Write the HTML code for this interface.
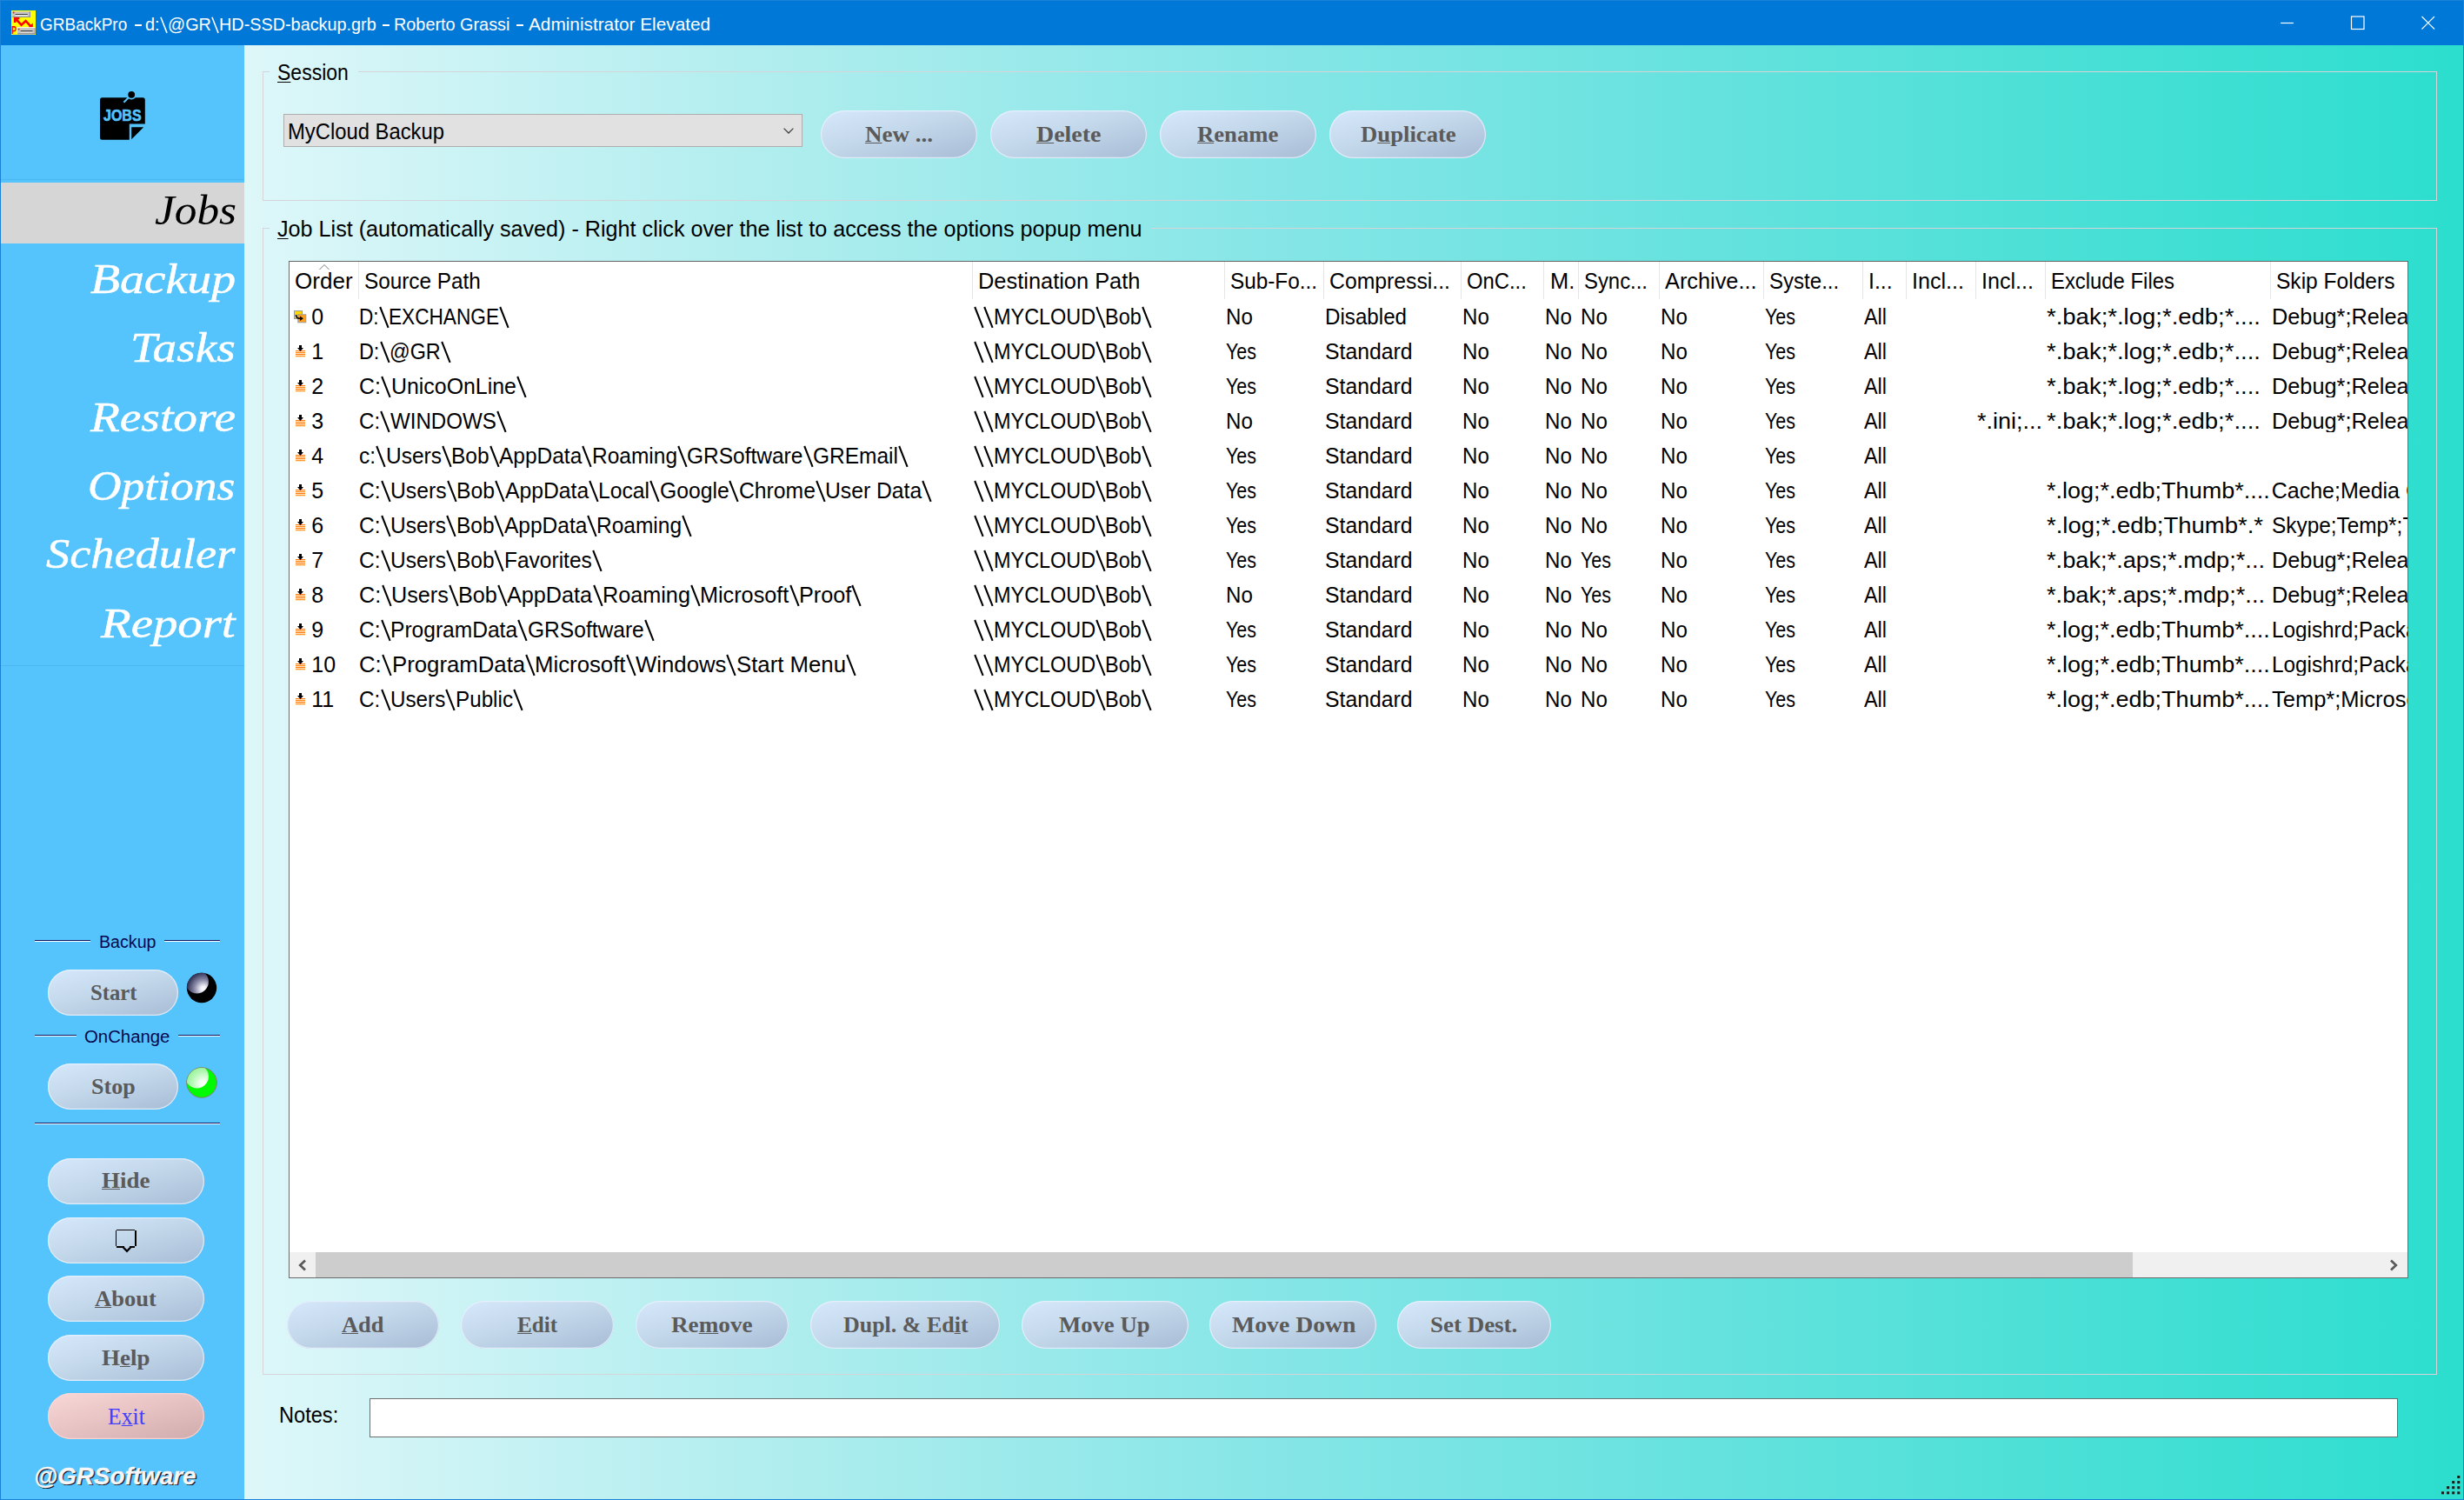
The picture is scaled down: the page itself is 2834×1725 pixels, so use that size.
<!DOCTYPE html>
<html><head><meta charset="utf-8"><title>GRBackPro</title><style>
html,body{margin:0;padding:0;}
body{width:2834px;height:1725px;overflow:hidden;position:relative;background:#55c4fd;font-family:"Liberation Sans",sans-serif;}
.a{position:absolute;}
.t{position:absolute;white-space:pre;line-height:1;transform-origin:0 0;}
.btn{position:absolute;border-radius:28px;background:linear-gradient(165deg,#d6e8fc 0%,#c4d8eb 45%,#a7bcd5 100%);box-shadow:inset 0 0 0 1.2px rgba(232,242,253,.8);}
.btn.pink{background:linear-gradient(165deg,#f9d8d7 0%,#e8c4c4 45%,#cfabab 100%);box-shadow:inset 0 0 0 1.2px rgba(255,214,214,.85);}
.gb{position:absolute;border:1px solid #c9d9d9;box-sizing:border-box;}
u{text-decoration:underline;text-decoration-thickness:1.3px;text-underline-offset:1px;}
.sn u{text-decoration-thickness:1.3px;text-underline-offset:1.5px;}
</style></head><body>
<div class="a" style="left:281px;top:52px;width:2553px;height:1673px;background:linear-gradient(90deg,rgb(222,247,249) 0%,rgb(175,237,238) 24.25%,rgb(131,229,230) 47.75%,rgb(92,225,219) 71.25%,rgb(43,222,206) 100%);"></div>
<div class="a" style="left:0;top:0;width:2834px;height:52px;background:#0078d7;"></div>
<div class="a" style="left:0;top:206px;width:281px;height:1px;background:#4bb6f1;"></div>
<div class="a" style="left:0;top:765px;width:281px;height:1px;background:#4bb6f1;"></div>
<div class="a" style="left:0;top:210px;width:281px;height:70px;background:#d6d6d6;"></div>
<div class="a" style="left:0;top:0;width:1px;height:1725px;background:#1a82d8;"></div>
<div class="a" style="left:2833px;top:0;width:1px;height:1725px;background:#1a82d8;"></div>
<div class="a" style="left:0;top:1724px;width:2834px;height:1px;background:#1a82d8;"></div>
<div class="a" style="left:0;top:0;width:2834px;height:1px;background:#1a82d8;"></div>
<svg class="a" style="left:13px;top:12px" width="28" height="28" viewBox="0 0 28 28">
<rect width="28" height="28" fill="#ffff00"/>
<path d="M4.2 14 V9 H9.4 M5 9.6 L11.6 16.6 L16.6 12 L22.6 18.6" stroke="#ff0000" stroke-width="2.6" fill="none" stroke-linejoin="miter"/>
<path d="M24.8 14.6 V19.6 H19.4 Z" fill="#ff0000"/>
<text x="0" y="26.6" font-family="Liberation Sans" font-weight="bold" font-size="12.6" fill="#ff0000" textLength="6" lengthAdjust="spacingAndGlyphs">P</text>
<rect x="1.2" y="1.2" width="20.6" height="6.5" fill="#c4c4c8"/><rect x="1.2" y="6.9" width="20.6" height="0.9" fill="#858585"/><rect x="20.9" y="1.2" width="0.9" height="6.5" fill="#7878a0"/>
<rect x="4.6" y="4.1" width="14.2" height="1" fill="#333"/><rect x="4.6" y="5.3" width="14.2" height="1" fill="#fff"/><circle cx="2.6" cy="2.6" r="1" fill="#ff1010"/>
<rect x="6.1" y="19.2" width="21.1" height="8" fill="#fdfdff"/>
<rect x="7.1" y="20.1" width="20.4" height="7.2" fill="#c4c4c4"/><rect x="7.1" y="26.3" width="20.4" height="1" fill="#858585"/><rect x="8" y="27.2" width="19" height="0.8" fill="#c8c0b0"/><rect x="26.7" y="20.1" width="0.8" height="7.2" fill="#9a9090"/>
<rect x="10.7" y="23.1" width="13.8" height="1.1" fill="#3a3a3a"/><rect x="10.7" y="24.8" width="13.8" height="0.8" fill="#eee"/><circle cx="8.7" cy="21.7" r="0.9" fill="#ff1010"/>
<rect x="27" y="27" width="1" height="1" fill="#ffff00"/>
</svg>
<svg class="a" style="left:2600px;top:0" width="234" height="52" viewBox="0 0 234 52" fill="none" stroke="#fff" stroke-width="1.2">
<path d="M23 26.5 H38"/><rect x="104.5" y="19" width="14.5" height="14.5"/><path d="M185.5 19 L200 33.5 M200 19 L185.5 33.5"/></svg>
<svg class="a" style="left:100px;top:95px" width="80" height="75" viewBox="0 0 80 75">
<path d="M17.5 17.2 H64.3 Q66.8 17.2 66.8 19.7 V47.5 H48.8 V65.8 H17.5 Q15 65.8 15 63.3 V19.7 Q15 17.2 17.5 17.2 Z" fill="#000"/>
<path d="M51.2 51.2 H65.2 L51.2 65.2 Z" fill="#000"/>
<circle cx="51.2" cy="13.8" r="5.6" fill="#55c4fd"/>
<path d="M48.5 16.5 L42.4 22.8" stroke="#55c4fd" stroke-width="2"/>
<circle cx="51.2" cy="13.8" r="3.9" fill="#000"/>
<text x="40.8" y="43.6" text-anchor="middle" font-family="Liberation Sans" font-weight="bold" font-size="18.5" fill="#55c4fd" stroke="#55c4fd" stroke-width="0.6" textLength="43.5" lengthAdjust="spacingAndGlyphs">JOBS</text>
</svg>
<div class="a" style="left:40px;top:1081px;width:64px;height:1px;background:#0b1560;"></div>
<div class="a" style="left:40px;top:1082px;width:64px;height:1px;background:#ffffff;"></div>
<div class="a" style="left:189px;top:1081px;width:64px;height:1px;background:#0b1560;"></div>
<div class="a" style="left:189px;top:1082px;width:64px;height:1px;background:#ffffff;"></div>
<div class="a" style="left:40px;top:1190px;width:48px;height:1px;background:#0b1560;"></div>
<div class="a" style="left:40px;top:1191px;width:48px;height:1px;background:#ffffff;"></div>
<div class="a" style="left:205px;top:1190px;width:48px;height:1px;background:#0b1560;"></div>
<div class="a" style="left:205px;top:1191px;width:48px;height:1px;background:#ffffff;"></div>
<div class="a" style="left:40px;top:1291px;width:213px;height:1px;background:#0b1560;"></div>
<div class="a" style="left:40px;top:1292px;width:213px;height:1px;background:#ffffff;"></div>
<svg class="a" style="left:212px;top:1116px" width="40" height="40" viewBox="0 0 40 40">
<defs><radialGradient id="g1" cx="0.78" cy="0.8" r="0.95"><stop offset="0" stop-color="#ffffff"/><stop offset="0.12" stop-color="#f0f0f6"/><stop offset="0.4" stop-color="#8c8ca8"/><stop offset="0.7" stop-color="#3a3a60"/><stop offset="1" stop-color="#08082a"/></radialGradient>
<clipPath id="c1"><circle cx="20" cy="20" r="17.2"/></clipPath></defs>
<circle cx="20" cy="20" r="17.2" fill="#000"/>
<circle cx="14.5" cy="13" r="13.4" fill="url(#g1)" clip-path="url(#c1)"/></svg>
<svg class="a" style="left:212px;top:1225px" width="40" height="40" viewBox="0 0 40 40">
<defs><radialGradient id="g2" cx="0.78" cy="0.8" r="0.95"><stop offset="0" stop-color="#ffffff"/><stop offset="0.15" stop-color="#f2fff2"/><stop offset="0.5" stop-color="#b8f8b8"/><stop offset="1" stop-color="#7cf07c"/></radialGradient>
<clipPath id="c2"><circle cx="20" cy="20" r="17"/></clipPath></defs>
<circle cx="20" cy="20" r="17.3" fill="#00fa00" stroke="#8c7c70" stroke-width="1"/>
<circle cx="14.5" cy="13" r="13.4" fill="url(#g2)" clip-path="url(#c2)"/></svg>
<div class="btn " style="left:55px;top:1115px;width:150px;height:53px;"></div>
<div class="btn " style="left:55px;top:1223px;width:150px;height:53px;"></div>
<div class="btn " style="left:55px;top:1332px;width:180px;height:53px;"></div>
<div class="btn " style="left:55px;top:1400px;width:180px;height:53px;"></div>
<div class="btn " style="left:55px;top:1467px;width:180px;height:53px;"></div>
<div class="btn " style="left:55px;top:1535px;width:180px;height:53px;"></div>
<div class="btn pink" style="left:55px;top:1602px;width:180px;height:53px;"></div>
<svg class="a" style="left:130px;top:1410px" width="32" height="34" viewBox="130 1410 32 34" shape-rendering="crispEdges" fill="#000">
<rect x="133" y="1415" width="1" height="18"/><rect x="134" y="1414" width="21" height="1"/><rect x="155" y="1415" width="2" height="18"/>
<rect x="134" y="1433" width="9" height="2"/><rect x="149" y="1433" width="6" height="2"/>
<path d="M141.6 1434.2 L146 1438.8 L150.4 1434.2" fill="none" stroke="#000" stroke-width="2.3" shape-rendering="geometricPrecision"/></svg>
<div class="btn " style="left:944px;top:127px;width:180px;height:55px;"></div>
<div class="btn " style="left:1139px;top:127px;width:180px;height:55px;"></div>
<div class="btn " style="left:1334px;top:127px;width:180px;height:55px;"></div>
<div class="btn " style="left:1529px;top:127px;width:180px;height:55px;"></div>
<div class="btn " style="left:330px;top:1496px;width:175px;height:55px;"></div>
<div class="btn " style="left:530px;top:1496px;width:176px;height:55px;"></div>
<div class="btn " style="left:731px;top:1496px;width:176px;height:55px;"></div>
<div class="btn " style="left:932px;top:1496px;width:218px;height:55px;"></div>
<div class="btn " style="left:1175px;top:1496px;width:192px;height:55px;"></div>
<div class="btn " style="left:1391px;top:1496px;width:192px;height:55px;"></div>
<div class="btn " style="left:1607px;top:1496px;width:177px;height:55px;"></div>
<div class="a" style="left:302px;top:82px;width:8px;height:1px;background:#d5d4d8;"></div>
<div class="a" style="left:412px;top:82px;width:2391px;height:1px;background:#d5d4d8;"></div>
<div class="a" style="left:302px;top:82px;width:1px;height:149px;background:#d5d4d8;"></div>
<div class="a" style="left:2802px;top:82px;width:1px;height:149px;background:#d5d4d8;"></div>
<div class="a" style="left:302px;top:230px;width:2501px;height:1px;background:#d5d4d8;"></div>
<div class="a" style="left:302px;top:262px;width:8px;height:1px;background:#d5d4d8;"></div>
<div class="a" style="left:1324px;top:262px;width:1479px;height:1px;background:#d5d4d8;"></div>
<div class="a" style="left:302px;top:262px;width:1px;height:1319px;background:#d5d4d8;"></div>
<div class="a" style="left:2802px;top:262px;width:1px;height:1319px;background:#d5d4d8;"></div>
<div class="a" style="left:302px;top:1580px;width:2501px;height:1px;background:#d5d4d8;"></div>
<div class="a" style="left:326px;top:131px;width:597px;height:38px;box-sizing:border-box;background:#e1e1e1;border:1px solid #adadad;"></div>
<svg class="a" style="left:898.4px;top:143.6px" width="18" height="12" viewBox="0 0 18 12" fill="none" stroke="#404040" stroke-width="1.3"><path d="M3.6 3.6 L9 9 L14.4 3.6"/></svg>
<div class="a" style="left:425px;top:1608px;width:2333px;height:45px;box-sizing:border-box;background:#fff;border:1px solid #6e6e6e;"></div>
<div class="a" style="left:332px;top:300px;width:2438px;height:1170px;box-sizing:border-box;background:#fff;border:1px solid #6b6b6b;border-top-color:#646464;"></div>
<div class="a" style="left:412px;top:301px;width:1px;height:43px;background:#e5e5e5;"></div>
<div class="a" style="left:1118px;top:301px;width:1px;height:43px;background:#e5e5e5;"></div>
<div class="a" style="left:1408px;top:301px;width:1px;height:43px;background:#e5e5e5;"></div>
<div class="a" style="left:1522px;top:301px;width:1px;height:43px;background:#e5e5e5;"></div>
<div class="a" style="left:1680px;top:301px;width:1px;height:43px;background:#e5e5e5;"></div>
<div class="a" style="left:1775px;top:301px;width:1px;height:43px;background:#e5e5e5;"></div>
<div class="a" style="left:1815px;top:301px;width:1px;height:43px;background:#e5e5e5;"></div>
<div class="a" style="left:1908px;top:301px;width:1px;height:43px;background:#e5e5e5;"></div>
<div class="a" style="left:2028px;top:301px;width:1px;height:43px;background:#e5e5e5;"></div>
<div class="a" style="left:2142px;top:301px;width:1px;height:43px;background:#e5e5e5;"></div>
<div class="a" style="left:2192px;top:301px;width:1px;height:43px;background:#e5e5e5;"></div>
<div class="a" style="left:2272px;top:301px;width:1px;height:43px;background:#e5e5e5;"></div>
<div class="a" style="left:2352px;top:301px;width:1px;height:43px;background:#e5e5e5;"></div>
<div class="a" style="left:2611px;top:301px;width:1px;height:43px;background:#e5e5e5;"></div>
<svg class="a" style="left:364px;top:302px" width="18" height="10" viewBox="0 0 18 10" fill="none" stroke="#7a7a7a" stroke-width="1"><path d="M3.5 8 L9 2.5 L14.5 8"/></svg>
<div class="a" style="left:333px;top:1440px;width:2436px;height:29px;background:#f0f0f0;"></div>
<div class="a" style="left:363px;top:1440px;width:2090px;height:29px;background:#cdcdcd;"></div>
<svg class="a" style="left:338px;top:1446px" width="20" height="18" viewBox="0 0 20 18" fill="none" stroke="#5a5a5a" stroke-width="2.7"><path d="M13 3.5 L7.2 9 L13 14.5"/></svg>
<svg class="a" style="left:2743px;top:1446px" width="20" height="18" viewBox="0 0 20 18" fill="none" stroke="#5a5a5a" stroke-width="2.7"><path d="M7 3.5 L12.8 9 L7 14.5"/></svg>
<svg class="a" style="left:2808px;top:1697px" width="24" height="24" viewBox="0 0 24 24" fill="#1a1a1a"><rect x="18.3" y="0.0" width="3" height="3"/><rect x="12.2" y="6.1" width="3" height="3"/><rect x="18.3" y="6.1" width="3" height="3"/><rect x="6.1" y="12.2" width="3" height="3"/><rect x="12.2" y="12.2" width="3" height="3"/><rect x="18.3" y="12.2" width="3" height="3"/><rect x="0.0" y="18.3" width="3" height="3"/><rect x="6.1" y="18.3" width="3" height="3"/><rect x="12.2" y="18.3" width="3" height="3"/><rect x="18.3" y="18.3" width="3" height="3"/></svg>
<svg class="a" style="left:338px;top:357px" width="15" height="15" viewBox="0 0 15 15">
<rect x="0.5" y="0.5" width="9" height="9" fill="#ffd800" stroke="#9a9a9a" stroke-width="1"/>
<rect x="4.8" y="4.8" width="9" height="9" fill="#ffa020" stroke="#9a9a9a" stroke-width="1"/>
<path d="M2.5 5 Q2.5 9.3 7 9.3" fill="none" stroke="#000" stroke-width="1.6"/><path d="M7 6.6 L11 9.3 L7 12 Z" fill="#000"/></svg>
<svg class="a" style="left:339px;top:397px" width="13" height="15" viewBox="0 0 13 15" shape-rendering="crispEdges">
<rect x="1" y="6" width="11" height="8" fill="#ffe2c0"/>
<rect x="1" y="6" width="11" height="1" fill="#ff7a10"/><rect x="1" y="8" width="11" height="1" fill="#ff8a20"/><rect x="1" y="10" width="11" height="1" fill="#ff7a10"/><rect x="1" y="12" width="11" height="1" fill="#ff9a30"/>
<path d="M5 0 H8 V3 H10 L6.5 7 L3 3 H5 Z" fill="#000" shape-rendering="geometricPrecision"/></svg>
<svg class="a" style="left:339px;top:437px" width="13" height="15" viewBox="0 0 13 15" shape-rendering="crispEdges">
<rect x="1" y="6" width="11" height="8" fill="#ffe2c0"/>
<rect x="1" y="6" width="11" height="1" fill="#ff7a10"/><rect x="1" y="8" width="11" height="1" fill="#ff8a20"/><rect x="1" y="10" width="11" height="1" fill="#ff7a10"/><rect x="1" y="12" width="11" height="1" fill="#ff9a30"/>
<path d="M5 0 H8 V3 H10 L6.5 7 L3 3 H5 Z" fill="#000" shape-rendering="geometricPrecision"/></svg>
<svg class="a" style="left:339px;top:477px" width="13" height="15" viewBox="0 0 13 15" shape-rendering="crispEdges">
<rect x="1" y="6" width="11" height="8" fill="#ffe2c0"/>
<rect x="1" y="6" width="11" height="1" fill="#ff7a10"/><rect x="1" y="8" width="11" height="1" fill="#ff8a20"/><rect x="1" y="10" width="11" height="1" fill="#ff7a10"/><rect x="1" y="12" width="11" height="1" fill="#ff9a30"/>
<path d="M5 0 H8 V3 H10 L6.5 7 L3 3 H5 Z" fill="#000" shape-rendering="geometricPrecision"/></svg>
<svg class="a" style="left:339px;top:517px" width="13" height="15" viewBox="0 0 13 15" shape-rendering="crispEdges">
<rect x="1" y="6" width="11" height="8" fill="#ffe2c0"/>
<rect x="1" y="6" width="11" height="1" fill="#ff7a10"/><rect x="1" y="8" width="11" height="1" fill="#ff8a20"/><rect x="1" y="10" width="11" height="1" fill="#ff7a10"/><rect x="1" y="12" width="11" height="1" fill="#ff9a30"/>
<path d="M5 0 H8 V3 H10 L6.5 7 L3 3 H5 Z" fill="#000" shape-rendering="geometricPrecision"/></svg>
<svg class="a" style="left:339px;top:557px" width="13" height="15" viewBox="0 0 13 15" shape-rendering="crispEdges">
<rect x="1" y="6" width="11" height="8" fill="#ffe2c0"/>
<rect x="1" y="6" width="11" height="1" fill="#ff7a10"/><rect x="1" y="8" width="11" height="1" fill="#ff8a20"/><rect x="1" y="10" width="11" height="1" fill="#ff7a10"/><rect x="1" y="12" width="11" height="1" fill="#ff9a30"/>
<path d="M5 0 H8 V3 H10 L6.5 7 L3 3 H5 Z" fill="#000" shape-rendering="geometricPrecision"/></svg>
<svg class="a" style="left:339px;top:597px" width="13" height="15" viewBox="0 0 13 15" shape-rendering="crispEdges">
<rect x="1" y="6" width="11" height="8" fill="#ffe2c0"/>
<rect x="1" y="6" width="11" height="1" fill="#ff7a10"/><rect x="1" y="8" width="11" height="1" fill="#ff8a20"/><rect x="1" y="10" width="11" height="1" fill="#ff7a10"/><rect x="1" y="12" width="11" height="1" fill="#ff9a30"/>
<path d="M5 0 H8 V3 H10 L6.5 7 L3 3 H5 Z" fill="#000" shape-rendering="geometricPrecision"/></svg>
<svg class="a" style="left:339px;top:637px" width="13" height="15" viewBox="0 0 13 15" shape-rendering="crispEdges">
<rect x="1" y="6" width="11" height="8" fill="#ffe2c0"/>
<rect x="1" y="6" width="11" height="1" fill="#ff7a10"/><rect x="1" y="8" width="11" height="1" fill="#ff8a20"/><rect x="1" y="10" width="11" height="1" fill="#ff7a10"/><rect x="1" y="12" width="11" height="1" fill="#ff9a30"/>
<path d="M5 0 H8 V3 H10 L6.5 7 L3 3 H5 Z" fill="#000" shape-rendering="geometricPrecision"/></svg>
<svg class="a" style="left:339px;top:677px" width="13" height="15" viewBox="0 0 13 15" shape-rendering="crispEdges">
<rect x="1" y="6" width="11" height="8" fill="#ffe2c0"/>
<rect x="1" y="6" width="11" height="1" fill="#ff7a10"/><rect x="1" y="8" width="11" height="1" fill="#ff8a20"/><rect x="1" y="10" width="11" height="1" fill="#ff7a10"/><rect x="1" y="12" width="11" height="1" fill="#ff9a30"/>
<path d="M5 0 H8 V3 H10 L6.5 7 L3 3 H5 Z" fill="#000" shape-rendering="geometricPrecision"/></svg>
<svg class="a" style="left:339px;top:717px" width="13" height="15" viewBox="0 0 13 15" shape-rendering="crispEdges">
<rect x="1" y="6" width="11" height="8" fill="#ffe2c0"/>
<rect x="1" y="6" width="11" height="1" fill="#ff7a10"/><rect x="1" y="8" width="11" height="1" fill="#ff8a20"/><rect x="1" y="10" width="11" height="1" fill="#ff7a10"/><rect x="1" y="12" width="11" height="1" fill="#ff9a30"/>
<path d="M5 0 H8 V3 H10 L6.5 7 L3 3 H5 Z" fill="#000" shape-rendering="geometricPrecision"/></svg>
<svg class="a" style="left:339px;top:757px" width="13" height="15" viewBox="0 0 13 15" shape-rendering="crispEdges">
<rect x="1" y="6" width="11" height="8" fill="#ffe2c0"/>
<rect x="1" y="6" width="11" height="1" fill="#ff7a10"/><rect x="1" y="8" width="11" height="1" fill="#ff8a20"/><rect x="1" y="10" width="11" height="1" fill="#ff7a10"/><rect x="1" y="12" width="11" height="1" fill="#ff9a30"/>
<path d="M5 0 H8 V3 H10 L6.5 7 L3 3 H5 Z" fill="#000" shape-rendering="geometricPrecision"/></svg>
<svg class="a" style="left:339px;top:797px" width="13" height="15" viewBox="0 0 13 15" shape-rendering="crispEdges">
<rect x="1" y="6" width="11" height="8" fill="#ffe2c0"/>
<rect x="1" y="6" width="11" height="1" fill="#ff7a10"/><rect x="1" y="8" width="11" height="1" fill="#ff8a20"/><rect x="1" y="10" width="11" height="1" fill="#ff7a10"/><rect x="1" y="12" width="11" height="1" fill="#ff9a30"/>
<path d="M5 0 H8 V3 H10 L6.5 7 L3 3 H5 Z" fill="#000" shape-rendering="geometricPrecision"/></svg>
<div class="a" style="left:155.3px;top:28px;width:7.6px;height:2px;background:#fff;"></div>
<div class="a" style="left:440px;top:28px;width:7.6px;height:2px;background:#fff;"></div>
<div class="a" style="left:594.2px;top:28px;width:7.6px;height:2px;background:#fff;"></div>
<div class="t sn" style="left:46.3px;top:17.2px;font:normal normal 21px/1 'Liberation Sans', sans-serif;color:#fff;transform:scaleX(0.9038);">GRBackPro</div>
<div class="t sn" style="left:166.6px;top:17.2px;font:normal normal 21px/1 'Liberation Sans', sans-serif;color:#fff;transform:scaleX(0.9443);">d:</div>
<div class="t sn" style="left:192.7px;top:17.2px;font:normal normal 21px/1 'Liberation Sans', sans-serif;color:#fff;transform:scaleX(0.9443);">@GR</div>
<div class="t sn" style="left:252.2px;top:17.2px;font:normal normal 21px/1 'Liberation Sans', sans-serif;color:#fff;transform:scaleX(0.9443);">HD-SSD-backup.grb</div>
<div class="t sn" style="left:453.0px;top:17.2px;font:normal normal 21px/1 'Liberation Sans', sans-serif;color:#fff;transform:scaleX(0.9446);">Roberto Grassi</div>
<div class="t sn" style="left:607.5px;top:17.2px;font:normal normal 21px/1 'Liberation Sans', sans-serif;color:#fff;transform:scaleX(0.9898);">Administrator Elevated</div>
<div class="t" style="left:177.5px;top:218.3px;font:italic normal 48px/1 'Liberation Serif', serif;color:#000;transform:scaleX(1.0684);">Jobs</div>
<div class="t" style="left:103.6px;top:297.0px;font:italic normal 48px/1 'Liberation Serif', serif;color:#fff;transform:scaleX(1.1603);-webkit-text-stroke:0.5px #fff;">Backup</div>
<div class="t" style="left:150.0px;top:376.3px;font:italic normal 48px/1 'Liberation Serif', serif;color:#fff;transform:scaleX(1.1491);-webkit-text-stroke:0.5px #fff;">Tasks</div>
<div class="t" style="left:103.6px;top:455.5px;font:italic normal 48px/1 'Liberation Serif', serif;color:#fff;transform:scaleX(1.1530);-webkit-text-stroke:0.5px #fff;">Restore</div>
<div class="t" style="left:101.3px;top:534.8px;font:italic normal 48px/1 'Liberation Serif', serif;color:#fff;transform:scaleX(1.1137);-webkit-text-stroke:0.5px #fff;">Options</div>
<div class="t" style="left:53.3px;top:612.8px;font:italic normal 48px/1 'Liberation Serif', serif;color:#fff;transform:scaleX(1.1322);-webkit-text-stroke:0.5px #fff;">Scheduler</div>
<div class="t" style="left:116.0px;top:692.5px;font:italic normal 48px/1 'Liberation Serif', serif;color:#fff;transform:scaleX(1.1834);-webkit-text-stroke:0.5px #fff;">Report</div>
<div class="t sn" style="left:114.0px;top:1072.8px;font:normal normal 20px/1 'Liberation Sans', sans-serif;color:#07074f;transform:scaleX(0.9819);">Backup</div>
<div class="t sn" style="left:97.2px;top:1181.5px;font:normal normal 20px/1 'Liberation Sans', sans-serif;color:#07074f;transform:scaleX(1.0172);">OnChange</div>
<div class="t" style="left:103.7px;top:1129.0px;font:normal bold 26px/1 'Liberation Serif', serif;color:#5a5a5a;transform:scaleX(0.9500);">Start</div>
<div class="t" style="left:104.9px;top:1237.0px;font:normal bold 26px/1 'Liberation Serif', serif;color:#5a5a5a;transform:scaleX(1.0004);">Stop</div>
<div class="t" style="left:116.9px;top:1345.4px;font:normal bold 26px/1 'Liberation Serif', serif;color:#5a5a5a;transform:scaleX(1.0365);"><u>H</u>ide</div>
<div class="t" style="left:109.2px;top:1480.8px;font:normal bold 26px/1 'Liberation Serif', serif;color:#5a5a5a;transform:scaleX(1.0208);"><u>A</u>bout</div>
<div class="t" style="left:116.9px;top:1549.2px;font:normal bold 26px/1 'Liberation Serif', serif;color:#5a5a5a;transform:scaleX(1.0365);">H<u>e</u>lp</div>
<div class="t" style="left:124.0px;top:1615.6px;font:normal normal 26.5px/1 'Liberation Serif', serif;color:#4040ff;transform:scaleX(0.9692);">E<u>x</u>it</div>
<div class="t sn" style="left:39.4px;top:1684.5px;font:italic bold 27px/1 'Liberation Sans', sans-serif;color:#f6f6f6;transform:scaleX(1.0318);text-shadow:1px 1px 0 #101020,1.6px 1.4px 0 rgba(10,10,30,.55);-webkit-text-stroke:0.3px #f6f6f6;">@GRSoftware</div>
<div class="t sn" style="left:319.2px;top:70.7px;font:normal normal 25px/1 'Liberation Sans', sans-serif;color:#000;transform:scaleX(0.9197);"><u>S</u>ession</div>
<div class="t sn" style="left:319.0px;top:250.6px;font:normal normal 25px/1 'Liberation Sans', sans-serif;color:#000;transform:scaleX(1.0066);"><u>J</u>ob List (automatically saved) - Right click over the list to access the options popup menu</div>
<div class="t sn" style="left:331.0px;top:137.6px;font:normal normal 26.5px/1 'Liberation Sans', sans-serif;color:#000;transform:scaleX(0.8986);">MyCloud Backup</div>
<div class="t sn" style="left:321.4px;top:1615.4px;font:normal normal 25.5px/1 'Liberation Sans', sans-serif;color:#000;transform:scaleX(0.9254);">Notes:</div>
<div class="t" style="left:994.7px;top:142.0px;font:normal bold 26px/1 'Liberation Serif', serif;color:#5a5a5a;transform:scaleX(1.0387);"><u>N</u>ew ...</div>
<div class="t" style="left:1192.0px;top:142.0px;font:normal bold 26px/1 'Liberation Serif', serif;color:#5a5a5a;transform:scaleX(1.0739);"><u>D</u>elete</div>
<div class="t" style="left:1377.0px;top:142.0px;font:normal bold 26px/1 'Liberation Serif', serif;color:#5a5a5a;transform:scaleX(1.0245);"><u>R</u>ename</div>
<div class="t" style="left:1564.5px;top:142.0px;font:normal bold 26px/1 'Liberation Serif', serif;color:#5a5a5a;transform:scaleX(1.0264);">D<u>u</u>plicate</div>
<div class="t" style="left:393.2px;top:1510.5px;font:normal bold 26px/1 'Liberation Serif', serif;color:#5a5a5a;transform:scaleX(1.0148);"><u>A</u>dd</div>
<div class="t" style="left:595.2px;top:1510.5px;font:normal bold 26px/1 'Liberation Serif', serif;color:#5a5a5a;transform:scaleX(0.9668);"><u>E</u>dit</div>
<div class="t" style="left:772.1px;top:1510.5px;font:normal bold 26px/1 'Liberation Serif', serif;color:#5a5a5a;transform:scaleX(1.0445);">Re<u>m</u>ove</div>
<div class="t" style="left:969.5px;top:1510.5px;font:normal bold 26px/1 'Liberation Serif', serif;color:#5a5a5a;transform:scaleX(0.9982);">Dupl. &amp; Ed<u>i</u>t</div>
<div class="t" style="left:1218.4px;top:1510.5px;font:normal bold 26px/1 'Liberation Serif', serif;color:#5a5a5a;transform:scaleX(1.0264);">Move Up</div>
<div class="t" style="left:1416.5px;top:1510.5px;font:normal bold 26px/1 'Liberation Serif', serif;color:#5a5a5a;transform:scaleX(1.0667);">Move Down</div>
<div class="t" style="left:1645.4px;top:1510.5px;font:normal bold 26px/1 'Liberation Serif', serif;color:#5a5a5a;transform:scaleX(1.0367);">Set Dest.</div>
<div class="t sn" style="left:339.0px;top:310.8px;font:normal normal 25px/1 'Liberation Sans', sans-serif;color:#000;transform:scaleX(1.0422);">Order</div>
<div class="t sn" style="left:419.0px;top:310.8px;font:normal normal 25px/1 'Liberation Sans', sans-serif;color:#000;transform:scaleX(0.9725);">Source Path</div>
<div class="t sn" style="left:1125.3px;top:310.8px;font:normal normal 25px/1 'Liberation Sans', sans-serif;color:#000;transform:scaleX(1.0161);">Destination Path</div>
<div class="t sn" style="left:1415.0px;top:310.8px;font:normal normal 25px/1 'Liberation Sans', sans-serif;color:#000;transform:scaleX(0.9726);">Sub-Fo...</div>
<div class="t sn" style="left:1529.2px;top:310.8px;font:normal normal 25px/1 'Liberation Sans', sans-serif;color:#000;transform:scaleX(0.9907);">Compressi...</div>
<div class="t sn" style="left:1687.0px;top:310.8px;font:normal normal 25px/1 'Liberation Sans', sans-serif;color:#000;transform:scaleX(0.9524);">OnC...</div>
<div class="t sn" style="left:1782.8px;top:310.8px;font:normal normal 25px/1 'Liberation Sans', sans-serif;color:#000;transform:scaleX(1.0154);">M.</div>
<div class="t sn" style="left:1822.0px;top:310.8px;font:normal normal 25px/1 'Liberation Sans', sans-serif;color:#000;transform:scaleX(0.9553);">Sync...</div>
<div class="t sn" style="left:1915.3px;top:310.8px;font:normal normal 25px/1 'Liberation Sans', sans-serif;color:#000;transform:scaleX(1.0125);">Archive...</div>
<div class="t sn" style="left:2034.7px;top:310.8px;font:normal normal 25px/1 'Liberation Sans', sans-serif;color:#000;transform:scaleX(0.9621);">Syste...</div>
<div class="t sn" style="left:2149.0px;top:310.8px;font:normal normal 25px/1 'Liberation Sans', sans-serif;color:#000;transform:scaleX(0.9934);">I...</div>
<div class="t sn" style="left:2199.4px;top:310.8px;font:normal normal 25px/1 'Liberation Sans', sans-serif;color:#000;transform:scaleX(1.0043);">Incl...</div>
<div class="t sn" style="left:2279.2px;top:310.8px;font:normal normal 25px/1 'Liberation Sans', sans-serif;color:#000;transform:scaleX(1.0043);">Incl...</div>
<div class="t sn" style="left:2359.4px;top:310.8px;font:normal normal 25px/1 'Liberation Sans', sans-serif;color:#000;transform:scaleX(0.9545);">Exclude Files</div>
<div class="t sn" style="left:2617.8px;top:310.8px;font:normal normal 25px/1 'Liberation Sans', sans-serif;color:#000;transform:scaleX(0.9817);">Skip Folders</div>
<div class="t sn" style="left:358.3px;top:351.8px;font:normal normal 25px/1 'Liberation Sans', sans-serif;color:#000;transform:scaleX(1.0000);">0</div>
<div class="t sn" style="left:413.3px;top:351.8px;font:normal normal 25px/1 'Liberation Sans', sans-serif;color:#000;transform:scaleX(0.9050);">D:</div>
<div class="t sn" style="left:447.3px;top:351.8px;font:normal normal 25px/1 'Liberation Sans', sans-serif;color:#000;transform:scaleX(0.9050);">EXCHANGE</div>
<div class="t sn" style="left:1142.8px;top:351.8px;font:normal normal 25px/1 'Liberation Sans', sans-serif;color:#000;transform:scaleX(0.9375);">MYCLOUD</div>
<div class="t sn" style="left:1271.4px;top:351.8px;font:normal normal 25px/1 'Liberation Sans', sans-serif;color:#000;transform:scaleX(0.9375);">Bob</div>
<div class="t sn" style="left:1410.0px;top:351.8px;font:normal normal 25px/1 'Liberation Sans', sans-serif;color:#000;transform:scaleX(0.9638);">No</div>
<div class="t sn" style="left:1523.7px;top:351.8px;font:normal normal 25px/1 'Liberation Sans', sans-serif;color:#000;transform:scaleX(0.9663);">Disabled</div>
<div class="t sn" style="left:1682.0px;top:351.8px;font:normal normal 25px/1 'Liberation Sans', sans-serif;color:#000;transform:scaleX(0.9638);">No</div>
<div class="t sn" style="left:1777.0px;top:351.8px;font:normal normal 25px/1 'Liberation Sans', sans-serif;color:#000;transform:scaleX(0.9638);">No</div>
<div class="t sn" style="left:1817.5px;top:351.8px;font:normal normal 25px/1 'Liberation Sans', sans-serif;color:#000;transform:scaleX(0.9638);">No</div>
<div class="t sn" style="left:1910.0px;top:351.8px;font:normal normal 25px/1 'Liberation Sans', sans-serif;color:#000;transform:scaleX(0.9638);">No</div>
<div class="t sn" style="left:2030.0px;top:351.8px;font:normal normal 25px/1 'Liberation Sans', sans-serif;color:#000;transform:scaleX(0.8582);">Yes</div>
<div class="t sn" style="left:2144.0px;top:351.8px;font:normal normal 25px/1 'Liberation Sans', sans-serif;color:#000;transform:scaleX(0.9358);">All</div>
<div class="t sn" style="left:2354.0px;top:351.8px;font:normal normal 25px/1 'Liberation Sans', sans-serif;color:#000;transform:scaleX(1.0994);">*.bak;*.log;*.edb;*....</div>
<div class="t sn" style="left:2612.7px;top:351.8px;font:normal normal 25px/1 'Liberation Sans', sans-serif;color:#000;transform:scaleX(1.0120);width:154.4px;overflow:hidden;">Debug*;Release*</div>
<div class="t sn" style="left:358.3px;top:391.8px;font:normal normal 25px/1 'Liberation Sans', sans-serif;color:#000;transform:scaleX(1.0000);">1</div>
<div class="t sn" style="left:413.3px;top:391.8px;font:normal normal 25px/1 'Liberation Sans', sans-serif;color:#000;transform:scaleX(0.9342);">D:</div>
<div class="t sn" style="left:448.1px;top:391.8px;font:normal normal 25px/1 'Liberation Sans', sans-serif;color:#000;transform:scaleX(0.9342);">@GR</div>
<div class="t sn" style="left:1142.8px;top:391.8px;font:normal normal 25px/1 'Liberation Sans', sans-serif;color:#000;transform:scaleX(0.9375);">MYCLOUD</div>
<div class="t sn" style="left:1271.4px;top:391.8px;font:normal normal 25px/1 'Liberation Sans', sans-serif;color:#000;transform:scaleX(0.9375);">Bob</div>
<div class="t sn" style="left:1410.0px;top:391.8px;font:normal normal 25px/1 'Liberation Sans', sans-serif;color:#000;transform:scaleX(0.8582);">Yes</div>
<div class="t sn" style="left:1523.7px;top:391.8px;font:normal normal 25px/1 'Liberation Sans', sans-serif;color:#000;transform:scaleX(0.9915);">Standard</div>
<div class="t sn" style="left:1682.0px;top:391.8px;font:normal normal 25px/1 'Liberation Sans', sans-serif;color:#000;transform:scaleX(0.9638);">No</div>
<div class="t sn" style="left:1777.0px;top:391.8px;font:normal normal 25px/1 'Liberation Sans', sans-serif;color:#000;transform:scaleX(0.9638);">No</div>
<div class="t sn" style="left:1817.5px;top:391.8px;font:normal normal 25px/1 'Liberation Sans', sans-serif;color:#000;transform:scaleX(0.9638);">No</div>
<div class="t sn" style="left:1910.0px;top:391.8px;font:normal normal 25px/1 'Liberation Sans', sans-serif;color:#000;transform:scaleX(0.9638);">No</div>
<div class="t sn" style="left:2030.0px;top:391.8px;font:normal normal 25px/1 'Liberation Sans', sans-serif;color:#000;transform:scaleX(0.8582);">Yes</div>
<div class="t sn" style="left:2144.0px;top:391.8px;font:normal normal 25px/1 'Liberation Sans', sans-serif;color:#000;transform:scaleX(0.9358);">All</div>
<div class="t sn" style="left:2354.0px;top:391.8px;font:normal normal 25px/1 'Liberation Sans', sans-serif;color:#000;transform:scaleX(1.0994);">*.bak;*.log;*.edb;*....</div>
<div class="t sn" style="left:2612.7px;top:391.8px;font:normal normal 25px/1 'Liberation Sans', sans-serif;color:#000;transform:scaleX(1.0120);width:154.4px;overflow:hidden;">Debug*;Release*</div>
<div class="t sn" style="left:358.3px;top:431.8px;font:normal normal 25px/1 'Liberation Sans', sans-serif;color:#000;transform:scaleX(1.0000);">2</div>
<div class="t sn" style="left:413.3px;top:431.8px;font:normal normal 25px/1 'Liberation Sans', sans-serif;color:#000;transform:scaleX(0.9957);">C:</div>
<div class="t sn" style="left:449.6px;top:431.8px;font:normal normal 25px/1 'Liberation Sans', sans-serif;color:#000;transform:scaleX(0.9957);">UnicoOnLine</div>
<div class="t sn" style="left:1142.8px;top:431.8px;font:normal normal 25px/1 'Liberation Sans', sans-serif;color:#000;transform:scaleX(0.9375);">MYCLOUD</div>
<div class="t sn" style="left:1271.4px;top:431.8px;font:normal normal 25px/1 'Liberation Sans', sans-serif;color:#000;transform:scaleX(0.9375);">Bob</div>
<div class="t sn" style="left:1410.0px;top:431.8px;font:normal normal 25px/1 'Liberation Sans', sans-serif;color:#000;transform:scaleX(0.8582);">Yes</div>
<div class="t sn" style="left:1523.7px;top:431.8px;font:normal normal 25px/1 'Liberation Sans', sans-serif;color:#000;transform:scaleX(0.9915);">Standard</div>
<div class="t sn" style="left:1682.0px;top:431.8px;font:normal normal 25px/1 'Liberation Sans', sans-serif;color:#000;transform:scaleX(0.9638);">No</div>
<div class="t sn" style="left:1777.0px;top:431.8px;font:normal normal 25px/1 'Liberation Sans', sans-serif;color:#000;transform:scaleX(0.9638);">No</div>
<div class="t sn" style="left:1817.5px;top:431.8px;font:normal normal 25px/1 'Liberation Sans', sans-serif;color:#000;transform:scaleX(0.9638);">No</div>
<div class="t sn" style="left:1910.0px;top:431.8px;font:normal normal 25px/1 'Liberation Sans', sans-serif;color:#000;transform:scaleX(0.9638);">No</div>
<div class="t sn" style="left:2030.0px;top:431.8px;font:normal normal 25px/1 'Liberation Sans', sans-serif;color:#000;transform:scaleX(0.8582);">Yes</div>
<div class="t sn" style="left:2144.0px;top:431.8px;font:normal normal 25px/1 'Liberation Sans', sans-serif;color:#000;transform:scaleX(0.9358);">All</div>
<div class="t sn" style="left:2354.0px;top:431.8px;font:normal normal 25px/1 'Liberation Sans', sans-serif;color:#000;transform:scaleX(1.0994);">*.bak;*.log;*.edb;*....</div>
<div class="t sn" style="left:2612.7px;top:431.8px;font:normal normal 25px/1 'Liberation Sans', sans-serif;color:#000;transform:scaleX(1.0120);width:154.4px;overflow:hidden;">Debug*;Release*</div>
<div class="t sn" style="left:358.3px;top:471.8px;font:normal normal 25px/1 'Liberation Sans', sans-serif;color:#000;transform:scaleX(1.0000);">3</div>
<div class="t sn" style="left:413.3px;top:471.8px;font:normal normal 25px/1 'Liberation Sans', sans-serif;color:#000;transform:scaleX(0.9645);">C:</div>
<div class="t sn" style="left:448.8px;top:471.8px;font:normal normal 25px/1 'Liberation Sans', sans-serif;color:#000;transform:scaleX(0.9645);">WINDOWS</div>
<div class="t sn" style="left:1142.8px;top:471.8px;font:normal normal 25px/1 'Liberation Sans', sans-serif;color:#000;transform:scaleX(0.9375);">MYCLOUD</div>
<div class="t sn" style="left:1271.4px;top:471.8px;font:normal normal 25px/1 'Liberation Sans', sans-serif;color:#000;transform:scaleX(0.9375);">Bob</div>
<div class="t sn" style="left:1410.0px;top:471.8px;font:normal normal 25px/1 'Liberation Sans', sans-serif;color:#000;transform:scaleX(0.9638);">No</div>
<div class="t sn" style="left:1523.7px;top:471.8px;font:normal normal 25px/1 'Liberation Sans', sans-serif;color:#000;transform:scaleX(0.9915);">Standard</div>
<div class="t sn" style="left:1682.0px;top:471.8px;font:normal normal 25px/1 'Liberation Sans', sans-serif;color:#000;transform:scaleX(0.9638);">No</div>
<div class="t sn" style="left:1777.0px;top:471.8px;font:normal normal 25px/1 'Liberation Sans', sans-serif;color:#000;transform:scaleX(0.9638);">No</div>
<div class="t sn" style="left:1817.5px;top:471.8px;font:normal normal 25px/1 'Liberation Sans', sans-serif;color:#000;transform:scaleX(0.9638);">No</div>
<div class="t sn" style="left:1910.0px;top:471.8px;font:normal normal 25px/1 'Liberation Sans', sans-serif;color:#000;transform:scaleX(0.9638);">No</div>
<div class="t sn" style="left:2030.0px;top:471.8px;font:normal normal 25px/1 'Liberation Sans', sans-serif;color:#000;transform:scaleX(0.8582);">Yes</div>
<div class="t sn" style="left:2144.0px;top:471.8px;font:normal normal 25px/1 'Liberation Sans', sans-serif;color:#000;transform:scaleX(0.9358);">All</div>
<div class="t sn" style="left:2274.0px;top:471.8px;font:normal normal 25px/1 'Liberation Sans', sans-serif;color:#000;transform:scaleX(1.0796);">*.ini;...</div>
<div class="t sn" style="left:2354.0px;top:471.8px;font:normal normal 25px/1 'Liberation Sans', sans-serif;color:#000;transform:scaleX(1.0994);">*.bak;*.log;*.edb;*....</div>
<div class="t sn" style="left:2612.7px;top:471.8px;font:normal normal 25px/1 'Liberation Sans', sans-serif;color:#000;transform:scaleX(1.0120);width:154.4px;overflow:hidden;">Debug*;Release*</div>
<div class="t sn" style="left:358.3px;top:511.8px;font:normal normal 25px/1 'Liberation Sans', sans-serif;color:#000;transform:scaleX(1.0000);">4</div>
<div class="t sn" style="left:413.3px;top:511.8px;font:normal normal 25px/1 'Liberation Sans', sans-serif;color:#000;transform:scaleX(0.9795);">c:</div>
<div class="t sn" style="left:443.7px;top:511.8px;font:normal normal 25px/1 'Liberation Sans', sans-serif;color:#000;transform:scaleX(0.9795);">Users</div>
<div class="t sn" style="left:519.1px;top:511.8px;font:normal normal 25px/1 'Liberation Sans', sans-serif;color:#000;transform:scaleX(0.9795);">Bob</div>
<div class="t sn" style="left:574.1px;top:511.8px;font:normal normal 25px/1 'Liberation Sans', sans-serif;color:#000;transform:scaleX(0.9795);">AppData</div>
<div class="t sn" style="left:680.8px;top:511.8px;font:normal normal 25px/1 'Liberation Sans', sans-serif;color:#000;transform:scaleX(0.9795);">Roaming</div>
<div class="t sn" style="left:790.2px;top:511.8px;font:normal normal 25px/1 'Liberation Sans', sans-serif;color:#000;transform:scaleX(0.9795);">GRSoftware</div>
<div class="t sn" style="left:934.9px;top:511.8px;font:normal normal 25px/1 'Liberation Sans', sans-serif;color:#000;transform:scaleX(0.9795);">GREmail</div>
<div class="t sn" style="left:1142.8px;top:511.8px;font:normal normal 25px/1 'Liberation Sans', sans-serif;color:#000;transform:scaleX(0.9375);">MYCLOUD</div>
<div class="t sn" style="left:1271.4px;top:511.8px;font:normal normal 25px/1 'Liberation Sans', sans-serif;color:#000;transform:scaleX(0.9375);">Bob</div>
<div class="t sn" style="left:1410.0px;top:511.8px;font:normal normal 25px/1 'Liberation Sans', sans-serif;color:#000;transform:scaleX(0.8582);">Yes</div>
<div class="t sn" style="left:1523.7px;top:511.8px;font:normal normal 25px/1 'Liberation Sans', sans-serif;color:#000;transform:scaleX(0.9915);">Standard</div>
<div class="t sn" style="left:1682.0px;top:511.8px;font:normal normal 25px/1 'Liberation Sans', sans-serif;color:#000;transform:scaleX(0.9638);">No</div>
<div class="t sn" style="left:1777.0px;top:511.8px;font:normal normal 25px/1 'Liberation Sans', sans-serif;color:#000;transform:scaleX(0.9638);">No</div>
<div class="t sn" style="left:1817.5px;top:511.8px;font:normal normal 25px/1 'Liberation Sans', sans-serif;color:#000;transform:scaleX(0.9638);">No</div>
<div class="t sn" style="left:1910.0px;top:511.8px;font:normal normal 25px/1 'Liberation Sans', sans-serif;color:#000;transform:scaleX(0.9638);">No</div>
<div class="t sn" style="left:2030.0px;top:511.8px;font:normal normal 25px/1 'Liberation Sans', sans-serif;color:#000;transform:scaleX(0.8582);">Yes</div>
<div class="t sn" style="left:2144.0px;top:511.8px;font:normal normal 25px/1 'Liberation Sans', sans-serif;color:#000;transform:scaleX(0.9358);">All</div>
<div class="t sn" style="left:358.3px;top:551.8px;font:normal normal 25px/1 'Liberation Sans', sans-serif;color:#000;transform:scaleX(1.0000);">5</div>
<div class="t sn" style="left:413.3px;top:551.8px;font:normal normal 25px/1 'Liberation Sans', sans-serif;color:#000;transform:scaleX(0.9883);">C:</div>
<div class="t sn" style="left:449.4px;top:551.8px;font:normal normal 25px/1 'Liberation Sans', sans-serif;color:#000;transform:scaleX(0.9883);">Users</div>
<div class="t sn" style="left:525.3px;top:551.8px;font:normal normal 25px/1 'Liberation Sans', sans-serif;color:#000;transform:scaleX(0.9883);">Bob</div>
<div class="t sn" style="left:580.7px;top:551.8px;font:normal normal 25px/1 'Liberation Sans', sans-serif;color:#000;transform:scaleX(0.9883);">AppData</div>
<div class="t sn" style="left:688.3px;top:551.8px;font:normal normal 25px/1 'Liberation Sans', sans-serif;color:#000;transform:scaleX(0.9883);">Local</div>
<div class="t sn" style="left:758.7px;top:551.8px;font:normal normal 25px/1 'Liberation Sans', sans-serif;color:#000;transform:scaleX(0.9883);">Google</div>
<div class="t sn" style="left:849.8px;top:551.8px;font:normal normal 25px/1 'Liberation Sans', sans-serif;color:#000;transform:scaleX(0.9883);">Chrome</div>
<div class="t sn" style="left:949.1px;top:551.8px;font:normal normal 25px/1 'Liberation Sans', sans-serif;color:#000;transform:scaleX(0.9883);">User Data</div>
<div class="t sn" style="left:1142.8px;top:551.8px;font:normal normal 25px/1 'Liberation Sans', sans-serif;color:#000;transform:scaleX(0.9375);">MYCLOUD</div>
<div class="t sn" style="left:1271.4px;top:551.8px;font:normal normal 25px/1 'Liberation Sans', sans-serif;color:#000;transform:scaleX(0.9375);">Bob</div>
<div class="t sn" style="left:1410.0px;top:551.8px;font:normal normal 25px/1 'Liberation Sans', sans-serif;color:#000;transform:scaleX(0.8582);">Yes</div>
<div class="t sn" style="left:1523.7px;top:551.8px;font:normal normal 25px/1 'Liberation Sans', sans-serif;color:#000;transform:scaleX(0.9915);">Standard</div>
<div class="t sn" style="left:1682.0px;top:551.8px;font:normal normal 25px/1 'Liberation Sans', sans-serif;color:#000;transform:scaleX(0.9638);">No</div>
<div class="t sn" style="left:1777.0px;top:551.8px;font:normal normal 25px/1 'Liberation Sans', sans-serif;color:#000;transform:scaleX(0.9638);">No</div>
<div class="t sn" style="left:1817.5px;top:551.8px;font:normal normal 25px/1 'Liberation Sans', sans-serif;color:#000;transform:scaleX(0.9638);">No</div>
<div class="t sn" style="left:1910.0px;top:551.8px;font:normal normal 25px/1 'Liberation Sans', sans-serif;color:#000;transform:scaleX(0.9638);">No</div>
<div class="t sn" style="left:2030.0px;top:551.8px;font:normal normal 25px/1 'Liberation Sans', sans-serif;color:#000;transform:scaleX(0.8582);">Yes</div>
<div class="t sn" style="left:2144.0px;top:551.8px;font:normal normal 25px/1 'Liberation Sans', sans-serif;color:#000;transform:scaleX(0.9358);">All</div>
<div class="t sn" style="left:2354.0px;top:551.8px;font:normal normal 25px/1 'Liberation Sans', sans-serif;color:#000;transform:scaleX(1.0802);">*.log;*.edb;Thumb*....</div>
<div class="t sn" style="left:2612.7px;top:551.8px;font:normal normal 25px/1 'Liberation Sans', sans-serif;color:#000;transform:scaleX(1.0000);width:156.3px;overflow:hidden;">Cache;Media Cache</div>
<div class="t sn" style="left:358.3px;top:591.8px;font:normal normal 25px/1 'Liberation Sans', sans-serif;color:#000;transform:scaleX(1.0000);">6</div>
<div class="t sn" style="left:413.3px;top:591.8px;font:normal normal 25px/1 'Liberation Sans', sans-serif;color:#000;transform:scaleX(0.9801);">C:</div>
<div class="t sn" style="left:449.2px;top:591.8px;font:normal normal 25px/1 'Liberation Sans', sans-serif;color:#000;transform:scaleX(0.9801);">Users</div>
<div class="t sn" style="left:524.6px;top:591.8px;font:normal normal 25px/1 'Liberation Sans', sans-serif;color:#000;transform:scaleX(0.9801);">Bob</div>
<div class="t sn" style="left:579.6px;top:591.8px;font:normal normal 25px/1 'Liberation Sans', sans-serif;color:#000;transform:scaleX(0.9801);">AppData</div>
<div class="t sn" style="left:686.3px;top:591.8px;font:normal normal 25px/1 'Liberation Sans', sans-serif;color:#000;transform:scaleX(0.9801);">Roaming</div>
<div class="t sn" style="left:1142.8px;top:591.8px;font:normal normal 25px/1 'Liberation Sans', sans-serif;color:#000;transform:scaleX(0.9375);">MYCLOUD</div>
<div class="t sn" style="left:1271.4px;top:591.8px;font:normal normal 25px/1 'Liberation Sans', sans-serif;color:#000;transform:scaleX(0.9375);">Bob</div>
<div class="t sn" style="left:1410.0px;top:591.8px;font:normal normal 25px/1 'Liberation Sans', sans-serif;color:#000;transform:scaleX(0.8582);">Yes</div>
<div class="t sn" style="left:1523.7px;top:591.8px;font:normal normal 25px/1 'Liberation Sans', sans-serif;color:#000;transform:scaleX(0.9915);">Standard</div>
<div class="t sn" style="left:1682.0px;top:591.8px;font:normal normal 25px/1 'Liberation Sans', sans-serif;color:#000;transform:scaleX(0.9638);">No</div>
<div class="t sn" style="left:1777.0px;top:591.8px;font:normal normal 25px/1 'Liberation Sans', sans-serif;color:#000;transform:scaleX(0.9638);">No</div>
<div class="t sn" style="left:1817.5px;top:591.8px;font:normal normal 25px/1 'Liberation Sans', sans-serif;color:#000;transform:scaleX(0.9638);">No</div>
<div class="t sn" style="left:1910.0px;top:591.8px;font:normal normal 25px/1 'Liberation Sans', sans-serif;color:#000;transform:scaleX(0.9638);">No</div>
<div class="t sn" style="left:2030.0px;top:591.8px;font:normal normal 25px/1 'Liberation Sans', sans-serif;color:#000;transform:scaleX(0.8582);">Yes</div>
<div class="t sn" style="left:2144.0px;top:591.8px;font:normal normal 25px/1 'Liberation Sans', sans-serif;color:#000;transform:scaleX(0.9358);">All</div>
<div class="t sn" style="left:2354.0px;top:591.8px;font:normal normal 25px/1 'Liberation Sans', sans-serif;color:#000;transform:scaleX(1.0992);">*.log;*.edb;Thumb*.*</div>
<div class="t sn" style="left:2612.7px;top:591.8px;font:normal normal 25px/1 'Liberation Sans', sans-serif;color:#000;transform:scaleX(0.9750);width:160.3px;overflow:hidden;">Skype;Temp*;Tmp</div>
<div class="t sn" style="left:358.3px;top:631.8px;font:normal normal 25px/1 'Liberation Sans', sans-serif;color:#000;transform:scaleX(1.0000);">7</div>
<div class="t sn" style="left:413.3px;top:631.8px;font:normal normal 25px/1 'Liberation Sans', sans-serif;color:#000;transform:scaleX(0.9808);">C:</div>
<div class="t sn" style="left:449.2px;top:631.8px;font:normal normal 25px/1 'Liberation Sans', sans-serif;color:#000;transform:scaleX(0.9808);">Users</div>
<div class="t sn" style="left:524.6px;top:631.8px;font:normal normal 25px/1 'Liberation Sans', sans-serif;color:#000;transform:scaleX(0.9808);">Bob</div>
<div class="t sn" style="left:579.7px;top:631.8px;font:normal normal 25px/1 'Liberation Sans', sans-serif;color:#000;transform:scaleX(0.9808);">Favorites</div>
<div class="t sn" style="left:1142.8px;top:631.8px;font:normal normal 25px/1 'Liberation Sans', sans-serif;color:#000;transform:scaleX(0.9375);">MYCLOUD</div>
<div class="t sn" style="left:1271.4px;top:631.8px;font:normal normal 25px/1 'Liberation Sans', sans-serif;color:#000;transform:scaleX(0.9375);">Bob</div>
<div class="t sn" style="left:1410.0px;top:631.8px;font:normal normal 25px/1 'Liberation Sans', sans-serif;color:#000;transform:scaleX(0.8582);">Yes</div>
<div class="t sn" style="left:1523.7px;top:631.8px;font:normal normal 25px/1 'Liberation Sans', sans-serif;color:#000;transform:scaleX(0.9915);">Standard</div>
<div class="t sn" style="left:1682.0px;top:631.8px;font:normal normal 25px/1 'Liberation Sans', sans-serif;color:#000;transform:scaleX(0.9638);">No</div>
<div class="t sn" style="left:1777.0px;top:631.8px;font:normal normal 25px/1 'Liberation Sans', sans-serif;color:#000;transform:scaleX(0.9638);">No</div>
<div class="t sn" style="left:1817.5px;top:631.8px;font:normal normal 25px/1 'Liberation Sans', sans-serif;color:#000;transform:scaleX(0.8582);">Yes</div>
<div class="t sn" style="left:1910.0px;top:631.8px;font:normal normal 25px/1 'Liberation Sans', sans-serif;color:#000;transform:scaleX(0.9638);">No</div>
<div class="t sn" style="left:2030.0px;top:631.8px;font:normal normal 25px/1 'Liberation Sans', sans-serif;color:#000;transform:scaleX(0.8582);">Yes</div>
<div class="t sn" style="left:2144.0px;top:631.8px;font:normal normal 25px/1 'Liberation Sans', sans-serif;color:#000;transform:scaleX(0.9358);">All</div>
<div class="t sn" style="left:2354.0px;top:631.8px;font:normal normal 25px/1 'Liberation Sans', sans-serif;color:#000;transform:scaleX(1.0881);">*.bak;*.aps;*.mdp;*...</div>
<div class="t sn" style="left:2612.7px;top:631.8px;font:normal normal 25px/1 'Liberation Sans', sans-serif;color:#000;transform:scaleX(1.0120);width:154.4px;overflow:hidden;">Debug*;Release*</div>
<div class="t sn" style="left:358.3px;top:671.8px;font:normal normal 25px/1 'Liberation Sans', sans-serif;color:#000;transform:scaleX(1.0000);">8</div>
<div class="t sn" style="left:413.3px;top:671.8px;font:normal normal 25px/1 'Liberation Sans', sans-serif;color:#000;transform:scaleX(1.0086);">C:</div>
<div class="t sn" style="left:449.9px;top:671.8px;font:normal normal 25px/1 'Liberation Sans', sans-serif;color:#000;transform:scaleX(1.0086);">Users</div>
<div class="t sn" style="left:527.2px;top:671.8px;font:normal normal 25px/1 'Liberation Sans', sans-serif;color:#000;transform:scaleX(1.0086);">Bob</div>
<div class="t sn" style="left:583.4px;top:671.8px;font:normal normal 25px/1 'Liberation Sans', sans-serif;color:#000;transform:scaleX(1.0086);">AppData</div>
<div class="t sn" style="left:692.9px;top:671.8px;font:normal normal 25px/1 'Liberation Sans', sans-serif;color:#000;transform:scaleX(1.0086);">Roaming</div>
<div class="t sn" style="left:805.3px;top:671.8px;font:normal normal 25px/1 'Liberation Sans', sans-serif;color:#000;transform:scaleX(1.0086);">Microsoft</div>
<div class="t sn" style="left:918.9px;top:671.8px;font:normal normal 25px/1 'Liberation Sans', sans-serif;color:#000;transform:scaleX(1.0086);">Proof</div>
<div class="t sn" style="left:1142.8px;top:671.8px;font:normal normal 25px/1 'Liberation Sans', sans-serif;color:#000;transform:scaleX(0.9375);">MYCLOUD</div>
<div class="t sn" style="left:1271.4px;top:671.8px;font:normal normal 25px/1 'Liberation Sans', sans-serif;color:#000;transform:scaleX(0.9375);">Bob</div>
<div class="t sn" style="left:1410.0px;top:671.8px;font:normal normal 25px/1 'Liberation Sans', sans-serif;color:#000;transform:scaleX(0.9638);">No</div>
<div class="t sn" style="left:1523.7px;top:671.8px;font:normal normal 25px/1 'Liberation Sans', sans-serif;color:#000;transform:scaleX(0.9915);">Standard</div>
<div class="t sn" style="left:1682.0px;top:671.8px;font:normal normal 25px/1 'Liberation Sans', sans-serif;color:#000;transform:scaleX(0.9638);">No</div>
<div class="t sn" style="left:1777.0px;top:671.8px;font:normal normal 25px/1 'Liberation Sans', sans-serif;color:#000;transform:scaleX(0.9638);">No</div>
<div class="t sn" style="left:1817.5px;top:671.8px;font:normal normal 25px/1 'Liberation Sans', sans-serif;color:#000;transform:scaleX(0.8582);">Yes</div>
<div class="t sn" style="left:1910.0px;top:671.8px;font:normal normal 25px/1 'Liberation Sans', sans-serif;color:#000;transform:scaleX(0.9638);">No</div>
<div class="t sn" style="left:2030.0px;top:671.8px;font:normal normal 25px/1 'Liberation Sans', sans-serif;color:#000;transform:scaleX(0.8582);">Yes</div>
<div class="t sn" style="left:2144.0px;top:671.8px;font:normal normal 25px/1 'Liberation Sans', sans-serif;color:#000;transform:scaleX(0.9358);">All</div>
<div class="t sn" style="left:2354.0px;top:671.8px;font:normal normal 25px/1 'Liberation Sans', sans-serif;color:#000;transform:scaleX(1.0881);">*.bak;*.aps;*.mdp;*...</div>
<div class="t sn" style="left:2612.7px;top:671.8px;font:normal normal 25px/1 'Liberation Sans', sans-serif;color:#000;transform:scaleX(1.0120);width:154.4px;overflow:hidden;">Debug*;Release*</div>
<div class="t sn" style="left:358.3px;top:711.8px;font:normal normal 25px/1 'Liberation Sans', sans-serif;color:#000;transform:scaleX(1.0000);">9</div>
<div class="t sn" style="left:413.3px;top:711.8px;font:normal normal 25px/1 'Liberation Sans', sans-serif;color:#000;transform:scaleX(0.9825);">C:</div>
<div class="t sn" style="left:449.3px;top:711.8px;font:normal normal 25px/1 'Liberation Sans', sans-serif;color:#000;transform:scaleX(0.9825);">ProgramData</div>
<div class="t sn" style="left:606.7px;top:711.8px;font:normal normal 25px/1 'Liberation Sans', sans-serif;color:#000;transform:scaleX(0.9825);">GRSoftware</div>
<div class="t sn" style="left:1142.8px;top:711.8px;font:normal normal 25px/1 'Liberation Sans', sans-serif;color:#000;transform:scaleX(0.9375);">MYCLOUD</div>
<div class="t sn" style="left:1271.4px;top:711.8px;font:normal normal 25px/1 'Liberation Sans', sans-serif;color:#000;transform:scaleX(0.9375);">Bob</div>
<div class="t sn" style="left:1410.0px;top:711.8px;font:normal normal 25px/1 'Liberation Sans', sans-serif;color:#000;transform:scaleX(0.8582);">Yes</div>
<div class="t sn" style="left:1523.7px;top:711.8px;font:normal normal 25px/1 'Liberation Sans', sans-serif;color:#000;transform:scaleX(0.9915);">Standard</div>
<div class="t sn" style="left:1682.0px;top:711.8px;font:normal normal 25px/1 'Liberation Sans', sans-serif;color:#000;transform:scaleX(0.9638);">No</div>
<div class="t sn" style="left:1777.0px;top:711.8px;font:normal normal 25px/1 'Liberation Sans', sans-serif;color:#000;transform:scaleX(0.9638);">No</div>
<div class="t sn" style="left:1817.5px;top:711.8px;font:normal normal 25px/1 'Liberation Sans', sans-serif;color:#000;transform:scaleX(0.9638);">No</div>
<div class="t sn" style="left:1910.0px;top:711.8px;font:normal normal 25px/1 'Liberation Sans', sans-serif;color:#000;transform:scaleX(0.9638);">No</div>
<div class="t sn" style="left:2030.0px;top:711.8px;font:normal normal 25px/1 'Liberation Sans', sans-serif;color:#000;transform:scaleX(0.8582);">Yes</div>
<div class="t sn" style="left:2144.0px;top:711.8px;font:normal normal 25px/1 'Liberation Sans', sans-serif;color:#000;transform:scaleX(0.9358);">All</div>
<div class="t sn" style="left:2354.0px;top:711.8px;font:normal normal 25px/1 'Liberation Sans', sans-serif;color:#000;transform:scaleX(1.0802);">*.log;*.edb;Thumb*....</div>
<div class="t sn" style="left:2612.7px;top:711.8px;font:normal normal 25px/1 'Liberation Sans', sans-serif;color:#000;transform:scaleX(0.9720);width:160.8px;overflow:hidden;">Logishrd;Packages</div>
<div class="t sn" style="left:358.3px;top:751.8px;font:normal normal 25px/1 'Liberation Sans', sans-serif;color:#000;transform:scaleX(1.0000);">10</div>
<div class="t sn" style="left:413.3px;top:751.8px;font:normal normal 25px/1 'Liberation Sans', sans-serif;color:#000;transform:scaleX(1.0301);">C:</div>
<div class="t sn" style="left:450.5px;top:751.8px;font:normal normal 25px/1 'Liberation Sans', sans-serif;color:#000;transform:scaleX(1.0301);">ProgramData</div>
<div class="t sn" style="left:615.0px;top:751.8px;font:normal normal 25px/1 'Liberation Sans', sans-serif;color:#000;transform:scaleX(1.0301);">Microsoft</div>
<div class="t sn" style="left:730.9px;top:751.8px;font:normal normal 25px/1 'Liberation Sans', sans-serif;color:#000;transform:scaleX(1.0301);">Windows</div>
<div class="t sn" style="left:846.7px;top:751.8px;font:normal normal 25px/1 'Liberation Sans', sans-serif;color:#000;transform:scaleX(1.0301);">Start Menu</div>
<div class="t sn" style="left:1142.8px;top:751.8px;font:normal normal 25px/1 'Liberation Sans', sans-serif;color:#000;transform:scaleX(0.9375);">MYCLOUD</div>
<div class="t sn" style="left:1271.4px;top:751.8px;font:normal normal 25px/1 'Liberation Sans', sans-serif;color:#000;transform:scaleX(0.9375);">Bob</div>
<div class="t sn" style="left:1410.0px;top:751.8px;font:normal normal 25px/1 'Liberation Sans', sans-serif;color:#000;transform:scaleX(0.8582);">Yes</div>
<div class="t sn" style="left:1523.7px;top:751.8px;font:normal normal 25px/1 'Liberation Sans', sans-serif;color:#000;transform:scaleX(0.9915);">Standard</div>
<div class="t sn" style="left:1682.0px;top:751.8px;font:normal normal 25px/1 'Liberation Sans', sans-serif;color:#000;transform:scaleX(0.9638);">No</div>
<div class="t sn" style="left:1777.0px;top:751.8px;font:normal normal 25px/1 'Liberation Sans', sans-serif;color:#000;transform:scaleX(0.9638);">No</div>
<div class="t sn" style="left:1817.5px;top:751.8px;font:normal normal 25px/1 'Liberation Sans', sans-serif;color:#000;transform:scaleX(0.9638);">No</div>
<div class="t sn" style="left:1910.0px;top:751.8px;font:normal normal 25px/1 'Liberation Sans', sans-serif;color:#000;transform:scaleX(0.9638);">No</div>
<div class="t sn" style="left:2030.0px;top:751.8px;font:normal normal 25px/1 'Liberation Sans', sans-serif;color:#000;transform:scaleX(0.8582);">Yes</div>
<div class="t sn" style="left:2144.0px;top:751.8px;font:normal normal 25px/1 'Liberation Sans', sans-serif;color:#000;transform:scaleX(0.9358);">All</div>
<div class="t sn" style="left:2354.0px;top:751.8px;font:normal normal 25px/1 'Liberation Sans', sans-serif;color:#000;transform:scaleX(1.0802);">*.log;*.edb;Thumb*....</div>
<div class="t sn" style="left:2612.7px;top:751.8px;font:normal normal 25px/1 'Liberation Sans', sans-serif;color:#000;transform:scaleX(0.9720);width:160.8px;overflow:hidden;">Logishrd;Packages</div>
<div class="t sn" style="left:358.3px;top:791.8px;font:normal normal 25px/1 'Liberation Sans', sans-serif;color:#000;transform:scaleX(1.0000);">11</div>
<div class="t sn" style="left:413.3px;top:791.8px;font:normal normal 25px/1 'Liberation Sans', sans-serif;color:#000;transform:scaleX(0.9692);">C:</div>
<div class="t sn" style="left:448.9px;top:791.8px;font:normal normal 25px/1 'Liberation Sans', sans-serif;color:#000;transform:scaleX(0.9692);">Users</div>
<div class="t sn" style="left:523.6px;top:791.8px;font:normal normal 25px/1 'Liberation Sans', sans-serif;color:#000;transform:scaleX(0.9692);">Public</div>
<div class="t sn" style="left:1142.8px;top:791.8px;font:normal normal 25px/1 'Liberation Sans', sans-serif;color:#000;transform:scaleX(0.9375);">MYCLOUD</div>
<div class="t sn" style="left:1271.4px;top:791.8px;font:normal normal 25px/1 'Liberation Sans', sans-serif;color:#000;transform:scaleX(0.9375);">Bob</div>
<div class="t sn" style="left:1410.0px;top:791.8px;font:normal normal 25px/1 'Liberation Sans', sans-serif;color:#000;transform:scaleX(0.8582);">Yes</div>
<div class="t sn" style="left:1523.7px;top:791.8px;font:normal normal 25px/1 'Liberation Sans', sans-serif;color:#000;transform:scaleX(0.9915);">Standard</div>
<div class="t sn" style="left:1682.0px;top:791.8px;font:normal normal 25px/1 'Liberation Sans', sans-serif;color:#000;transform:scaleX(0.9638);">No</div>
<div class="t sn" style="left:1777.0px;top:791.8px;font:normal normal 25px/1 'Liberation Sans', sans-serif;color:#000;transform:scaleX(0.9638);">No</div>
<div class="t sn" style="left:1817.5px;top:791.8px;font:normal normal 25px/1 'Liberation Sans', sans-serif;color:#000;transform:scaleX(0.9638);">No</div>
<div class="t sn" style="left:1910.0px;top:791.8px;font:normal normal 25px/1 'Liberation Sans', sans-serif;color:#000;transform:scaleX(0.9638);">No</div>
<div class="t sn" style="left:2030.0px;top:791.8px;font:normal normal 25px/1 'Liberation Sans', sans-serif;color:#000;transform:scaleX(0.8582);">Yes</div>
<div class="t sn" style="left:2144.0px;top:791.8px;font:normal normal 25px/1 'Liberation Sans', sans-serif;color:#000;transform:scaleX(0.9358);">All</div>
<div class="t sn" style="left:2354.0px;top:791.8px;font:normal normal 25px/1 'Liberation Sans', sans-serif;color:#000;transform:scaleX(1.0802);">*.log;*.edb;Thumb*....</div>
<div class="t sn" style="left:2612.7px;top:791.8px;font:normal normal 25px/1 'Liberation Sans', sans-serif;color:#000;transform:scaleX(1.0200);width:153.2px;overflow:hidden;">Temp*;Microsoft</div>
<svg class="a" style="left:183.6px;top:19.0px" width="9.1" height="19.8" viewBox="0 0 12 26"><path d="M1.2 1 L10.6 24.8" stroke="#fff" stroke-width="2.05" fill="none"/></svg>
<svg class="a" style="left:243.1px;top:19.0px" width="9.1" height="19.8" viewBox="0 0 12 26"><path d="M1.2 1 L10.6 24.8" stroke="#fff" stroke-width="2.05" fill="none"/></svg>
<svg class="a" style="left:435.9px;top:352.0px" width="12.0" height="26.0" viewBox="0 0 12 26"><path d="M1.2 1 L10.6 24.8" stroke="#000" stroke-width="2.05" fill="none"/></svg>
<svg class="a" style="left:574.3px;top:352.0px" width="12.0" height="26.0" viewBox="0 0 12 26"><path d="M1.2 1 L10.6 24.8" stroke="#000" stroke-width="2.05" fill="none"/></svg>
<svg class="a" style="left:1120.0px;top:352.0px" width="12.0" height="26.0" viewBox="0 0 12 26"><path d="M1.2 1 L10.6 24.8" stroke="#000" stroke-width="2.05" fill="none"/></svg>
<svg class="a" style="left:1131.4px;top:352.0px" width="12.0" height="26.0" viewBox="0 0 12 26"><path d="M1.2 1 L10.6 24.8" stroke="#000" stroke-width="2.05" fill="none"/></svg>
<svg class="a" style="left:1260.0px;top:352.0px" width="12.0" height="26.0" viewBox="0 0 12 26"><path d="M1.2 1 L10.6 24.8" stroke="#000" stroke-width="2.05" fill="none"/></svg>
<svg class="a" style="left:1313.1px;top:352.0px" width="12.0" height="26.0" viewBox="0 0 12 26"><path d="M1.2 1 L10.6 24.8" stroke="#000" stroke-width="2.05" fill="none"/></svg>
<svg class="a" style="left:436.7px;top:392.0px" width="12.0" height="26.0" viewBox="0 0 12 26"><path d="M1.2 1 L10.6 24.8" stroke="#000" stroke-width="2.05" fill="none"/></svg>
<svg class="a" style="left:506.8px;top:392.0px" width="12.0" height="26.0" viewBox="0 0 12 26"><path d="M1.2 1 L10.6 24.8" stroke="#000" stroke-width="2.05" fill="none"/></svg>
<svg class="a" style="left:1120.0px;top:392.0px" width="12.0" height="26.0" viewBox="0 0 12 26"><path d="M1.2 1 L10.6 24.8" stroke="#000" stroke-width="2.05" fill="none"/></svg>
<svg class="a" style="left:1131.4px;top:392.0px" width="12.0" height="26.0" viewBox="0 0 12 26"><path d="M1.2 1 L10.6 24.8" stroke="#000" stroke-width="2.05" fill="none"/></svg>
<svg class="a" style="left:1260.0px;top:392.0px" width="12.0" height="26.0" viewBox="0 0 12 26"><path d="M1.2 1 L10.6 24.8" stroke="#000" stroke-width="2.05" fill="none"/></svg>
<svg class="a" style="left:1313.1px;top:392.0px" width="12.0" height="26.0" viewBox="0 0 12 26"><path d="M1.2 1 L10.6 24.8" stroke="#000" stroke-width="2.05" fill="none"/></svg>
<svg class="a" style="left:438.2px;top:432.0px" width="12.0" height="26.0" viewBox="0 0 12 26"><path d="M1.2 1 L10.6 24.8" stroke="#000" stroke-width="2.05" fill="none"/></svg>
<svg class="a" style="left:593.5px;top:432.0px" width="12.0" height="26.0" viewBox="0 0 12 26"><path d="M1.2 1 L10.6 24.8" stroke="#000" stroke-width="2.05" fill="none"/></svg>
<svg class="a" style="left:1120.0px;top:432.0px" width="12.0" height="26.0" viewBox="0 0 12 26"><path d="M1.2 1 L10.6 24.8" stroke="#000" stroke-width="2.05" fill="none"/></svg>
<svg class="a" style="left:1131.4px;top:432.0px" width="12.0" height="26.0" viewBox="0 0 12 26"><path d="M1.2 1 L10.6 24.8" stroke="#000" stroke-width="2.05" fill="none"/></svg>
<svg class="a" style="left:1260.0px;top:432.0px" width="12.0" height="26.0" viewBox="0 0 12 26"><path d="M1.2 1 L10.6 24.8" stroke="#000" stroke-width="2.05" fill="none"/></svg>
<svg class="a" style="left:1313.1px;top:432.0px" width="12.0" height="26.0" viewBox="0 0 12 26"><path d="M1.2 1 L10.6 24.8" stroke="#000" stroke-width="2.05" fill="none"/></svg>
<svg class="a" style="left:437.4px;top:472.0px" width="12.0" height="26.0" viewBox="0 0 12 26"><path d="M1.2 1 L10.6 24.8" stroke="#000" stroke-width="2.05" fill="none"/></svg>
<svg class="a" style="left:570.7px;top:472.0px" width="12.0" height="26.0" viewBox="0 0 12 26"><path d="M1.2 1 L10.6 24.8" stroke="#000" stroke-width="2.05" fill="none"/></svg>
<svg class="a" style="left:1120.0px;top:472.0px" width="12.0" height="26.0" viewBox="0 0 12 26"><path d="M1.2 1 L10.6 24.8" stroke="#000" stroke-width="2.05" fill="none"/></svg>
<svg class="a" style="left:1131.4px;top:472.0px" width="12.0" height="26.0" viewBox="0 0 12 26"><path d="M1.2 1 L10.6 24.8" stroke="#000" stroke-width="2.05" fill="none"/></svg>
<svg class="a" style="left:1260.0px;top:472.0px" width="12.0" height="26.0" viewBox="0 0 12 26"><path d="M1.2 1 L10.6 24.8" stroke="#000" stroke-width="2.05" fill="none"/></svg>
<svg class="a" style="left:1313.1px;top:472.0px" width="12.0" height="26.0" viewBox="0 0 12 26"><path d="M1.2 1 L10.6 24.8" stroke="#000" stroke-width="2.05" fill="none"/></svg>
<svg class="a" style="left:432.3px;top:512.0px" width="12.0" height="26.0" viewBox="0 0 12 26"><path d="M1.2 1 L10.6 24.8" stroke="#000" stroke-width="2.05" fill="none"/></svg>
<svg class="a" style="left:507.7px;top:512.0px" width="12.0" height="26.0" viewBox="0 0 12 26"><path d="M1.2 1 L10.6 24.8" stroke="#000" stroke-width="2.05" fill="none"/></svg>
<svg class="a" style="left:562.7px;top:512.0px" width="12.0" height="26.0" viewBox="0 0 12 26"><path d="M1.2 1 L10.6 24.8" stroke="#000" stroke-width="2.05" fill="none"/></svg>
<svg class="a" style="left:669.4px;top:512.0px" width="12.0" height="26.0" viewBox="0 0 12 26"><path d="M1.2 1 L10.6 24.8" stroke="#000" stroke-width="2.05" fill="none"/></svg>
<svg class="a" style="left:778.8px;top:512.0px" width="12.0" height="26.0" viewBox="0 0 12 26"><path d="M1.2 1 L10.6 24.8" stroke="#000" stroke-width="2.05" fill="none"/></svg>
<svg class="a" style="left:923.5px;top:512.0px" width="12.0" height="26.0" viewBox="0 0 12 26"><path d="M1.2 1 L10.6 24.8" stroke="#000" stroke-width="2.05" fill="none"/></svg>
<svg class="a" style="left:1032.9px;top:512.0px" width="12.0" height="26.0" viewBox="0 0 12 26"><path d="M1.2 1 L10.6 24.8" stroke="#000" stroke-width="2.05" fill="none"/></svg>
<svg class="a" style="left:1120.0px;top:512.0px" width="12.0" height="26.0" viewBox="0 0 12 26"><path d="M1.2 1 L10.6 24.8" stroke="#000" stroke-width="2.05" fill="none"/></svg>
<svg class="a" style="left:1131.4px;top:512.0px" width="12.0" height="26.0" viewBox="0 0 12 26"><path d="M1.2 1 L10.6 24.8" stroke="#000" stroke-width="2.05" fill="none"/></svg>
<svg class="a" style="left:1260.0px;top:512.0px" width="12.0" height="26.0" viewBox="0 0 12 26"><path d="M1.2 1 L10.6 24.8" stroke="#000" stroke-width="2.05" fill="none"/></svg>
<svg class="a" style="left:1313.1px;top:512.0px" width="12.0" height="26.0" viewBox="0 0 12 26"><path d="M1.2 1 L10.6 24.8" stroke="#000" stroke-width="2.05" fill="none"/></svg>
<svg class="a" style="left:438.0px;top:552.0px" width="12.0" height="26.0" viewBox="0 0 12 26"><path d="M1.2 1 L10.6 24.8" stroke="#000" stroke-width="2.05" fill="none"/></svg>
<svg class="a" style="left:513.9px;top:552.0px" width="12.0" height="26.0" viewBox="0 0 12 26"><path d="M1.2 1 L10.6 24.8" stroke="#000" stroke-width="2.05" fill="none"/></svg>
<svg class="a" style="left:569.3px;top:552.0px" width="12.0" height="26.0" viewBox="0 0 12 26"><path d="M1.2 1 L10.6 24.8" stroke="#000" stroke-width="2.05" fill="none"/></svg>
<svg class="a" style="left:676.9px;top:552.0px" width="12.0" height="26.0" viewBox="0 0 12 26"><path d="M1.2 1 L10.6 24.8" stroke="#000" stroke-width="2.05" fill="none"/></svg>
<svg class="a" style="left:747.3px;top:552.0px" width="12.0" height="26.0" viewBox="0 0 12 26"><path d="M1.2 1 L10.6 24.8" stroke="#000" stroke-width="2.05" fill="none"/></svg>
<svg class="a" style="left:838.4px;top:552.0px" width="12.0" height="26.0" viewBox="0 0 12 26"><path d="M1.2 1 L10.6 24.8" stroke="#000" stroke-width="2.05" fill="none"/></svg>
<svg class="a" style="left:937.7px;top:552.0px" width="12.0" height="26.0" viewBox="0 0 12 26"><path d="M1.2 1 L10.6 24.8" stroke="#000" stroke-width="2.05" fill="none"/></svg>
<svg class="a" style="left:1060.3px;top:552.0px" width="12.0" height="26.0" viewBox="0 0 12 26"><path d="M1.2 1 L10.6 24.8" stroke="#000" stroke-width="2.05" fill="none"/></svg>
<svg class="a" style="left:1120.0px;top:552.0px" width="12.0" height="26.0" viewBox="0 0 12 26"><path d="M1.2 1 L10.6 24.8" stroke="#000" stroke-width="2.05" fill="none"/></svg>
<svg class="a" style="left:1131.4px;top:552.0px" width="12.0" height="26.0" viewBox="0 0 12 26"><path d="M1.2 1 L10.6 24.8" stroke="#000" stroke-width="2.05" fill="none"/></svg>
<svg class="a" style="left:1260.0px;top:552.0px" width="12.0" height="26.0" viewBox="0 0 12 26"><path d="M1.2 1 L10.6 24.8" stroke="#000" stroke-width="2.05" fill="none"/></svg>
<svg class="a" style="left:1313.1px;top:552.0px" width="12.0" height="26.0" viewBox="0 0 12 26"><path d="M1.2 1 L10.6 24.8" stroke="#000" stroke-width="2.05" fill="none"/></svg>
<svg class="a" style="left:437.8px;top:592.0px" width="12.0" height="26.0" viewBox="0 0 12 26"><path d="M1.2 1 L10.6 24.8" stroke="#000" stroke-width="2.05" fill="none"/></svg>
<svg class="a" style="left:513.2px;top:592.0px" width="12.0" height="26.0" viewBox="0 0 12 26"><path d="M1.2 1 L10.6 24.8" stroke="#000" stroke-width="2.05" fill="none"/></svg>
<svg class="a" style="left:568.2px;top:592.0px" width="12.0" height="26.0" viewBox="0 0 12 26"><path d="M1.2 1 L10.6 24.8" stroke="#000" stroke-width="2.05" fill="none"/></svg>
<svg class="a" style="left:674.9px;top:592.0px" width="12.0" height="26.0" viewBox="0 0 12 26"><path d="M1.2 1 L10.6 24.8" stroke="#000" stroke-width="2.05" fill="none"/></svg>
<svg class="a" style="left:784.4px;top:592.0px" width="12.0" height="26.0" viewBox="0 0 12 26"><path d="M1.2 1 L10.6 24.8" stroke="#000" stroke-width="2.05" fill="none"/></svg>
<svg class="a" style="left:1120.0px;top:592.0px" width="12.0" height="26.0" viewBox="0 0 12 26"><path d="M1.2 1 L10.6 24.8" stroke="#000" stroke-width="2.05" fill="none"/></svg>
<svg class="a" style="left:1131.4px;top:592.0px" width="12.0" height="26.0" viewBox="0 0 12 26"><path d="M1.2 1 L10.6 24.8" stroke="#000" stroke-width="2.05" fill="none"/></svg>
<svg class="a" style="left:1260.0px;top:592.0px" width="12.0" height="26.0" viewBox="0 0 12 26"><path d="M1.2 1 L10.6 24.8" stroke="#000" stroke-width="2.05" fill="none"/></svg>
<svg class="a" style="left:1313.1px;top:592.0px" width="12.0" height="26.0" viewBox="0 0 12 26"><path d="M1.2 1 L10.6 24.8" stroke="#000" stroke-width="2.05" fill="none"/></svg>
<svg class="a" style="left:437.8px;top:632.0px" width="12.0" height="26.0" viewBox="0 0 12 26"><path d="M1.2 1 L10.6 24.8" stroke="#000" stroke-width="2.05" fill="none"/></svg>
<svg class="a" style="left:513.2px;top:632.0px" width="12.0" height="26.0" viewBox="0 0 12 26"><path d="M1.2 1 L10.6 24.8" stroke="#000" stroke-width="2.05" fill="none"/></svg>
<svg class="a" style="left:568.3px;top:632.0px" width="12.0" height="26.0" viewBox="0 0 12 26"><path d="M1.2 1 L10.6 24.8" stroke="#000" stroke-width="2.05" fill="none"/></svg>
<svg class="a" style="left:680.5px;top:632.0px" width="12.0" height="26.0" viewBox="0 0 12 26"><path d="M1.2 1 L10.6 24.8" stroke="#000" stroke-width="2.05" fill="none"/></svg>
<svg class="a" style="left:1120.0px;top:632.0px" width="12.0" height="26.0" viewBox="0 0 12 26"><path d="M1.2 1 L10.6 24.8" stroke="#000" stroke-width="2.05" fill="none"/></svg>
<svg class="a" style="left:1131.4px;top:632.0px" width="12.0" height="26.0" viewBox="0 0 12 26"><path d="M1.2 1 L10.6 24.8" stroke="#000" stroke-width="2.05" fill="none"/></svg>
<svg class="a" style="left:1260.0px;top:632.0px" width="12.0" height="26.0" viewBox="0 0 12 26"><path d="M1.2 1 L10.6 24.8" stroke="#000" stroke-width="2.05" fill="none"/></svg>
<svg class="a" style="left:1313.1px;top:632.0px" width="12.0" height="26.0" viewBox="0 0 12 26"><path d="M1.2 1 L10.6 24.8" stroke="#000" stroke-width="2.05" fill="none"/></svg>
<svg class="a" style="left:438.5px;top:672.0px" width="12.0" height="26.0" viewBox="0 0 12 26"><path d="M1.2 1 L10.6 24.8" stroke="#000" stroke-width="2.05" fill="none"/></svg>
<svg class="a" style="left:515.8px;top:672.0px" width="12.0" height="26.0" viewBox="0 0 12 26"><path d="M1.2 1 L10.6 24.8" stroke="#000" stroke-width="2.05" fill="none"/></svg>
<svg class="a" style="left:572.0px;top:672.0px" width="12.0" height="26.0" viewBox="0 0 12 26"><path d="M1.2 1 L10.6 24.8" stroke="#000" stroke-width="2.05" fill="none"/></svg>
<svg class="a" style="left:681.5px;top:672.0px" width="12.0" height="26.0" viewBox="0 0 12 26"><path d="M1.2 1 L10.6 24.8" stroke="#000" stroke-width="2.05" fill="none"/></svg>
<svg class="a" style="left:793.9px;top:672.0px" width="12.0" height="26.0" viewBox="0 0 12 26"><path d="M1.2 1 L10.6 24.8" stroke="#000" stroke-width="2.05" fill="none"/></svg>
<svg class="a" style="left:907.5px;top:672.0px" width="12.0" height="26.0" viewBox="0 0 12 26"><path d="M1.2 1 L10.6 24.8" stroke="#000" stroke-width="2.05" fill="none"/></svg>
<svg class="a" style="left:979.2px;top:672.0px" width="12.0" height="26.0" viewBox="0 0 12 26"><path d="M1.2 1 L10.6 24.8" stroke="#000" stroke-width="2.05" fill="none"/></svg>
<svg class="a" style="left:1120.0px;top:672.0px" width="12.0" height="26.0" viewBox="0 0 12 26"><path d="M1.2 1 L10.6 24.8" stroke="#000" stroke-width="2.05" fill="none"/></svg>
<svg class="a" style="left:1131.4px;top:672.0px" width="12.0" height="26.0" viewBox="0 0 12 26"><path d="M1.2 1 L10.6 24.8" stroke="#000" stroke-width="2.05" fill="none"/></svg>
<svg class="a" style="left:1260.0px;top:672.0px" width="12.0" height="26.0" viewBox="0 0 12 26"><path d="M1.2 1 L10.6 24.8" stroke="#000" stroke-width="2.05" fill="none"/></svg>
<svg class="a" style="left:1313.1px;top:672.0px" width="12.0" height="26.0" viewBox="0 0 12 26"><path d="M1.2 1 L10.6 24.8" stroke="#000" stroke-width="2.05" fill="none"/></svg>
<svg class="a" style="left:437.9px;top:712.0px" width="12.0" height="26.0" viewBox="0 0 12 26"><path d="M1.2 1 L10.6 24.8" stroke="#000" stroke-width="2.05" fill="none"/></svg>
<svg class="a" style="left:595.3px;top:712.0px" width="12.0" height="26.0" viewBox="0 0 12 26"><path d="M1.2 1 L10.6 24.8" stroke="#000" stroke-width="2.05" fill="none"/></svg>
<svg class="a" style="left:740.5px;top:712.0px" width="12.0" height="26.0" viewBox="0 0 12 26"><path d="M1.2 1 L10.6 24.8" stroke="#000" stroke-width="2.05" fill="none"/></svg>
<svg class="a" style="left:1120.0px;top:712.0px" width="12.0" height="26.0" viewBox="0 0 12 26"><path d="M1.2 1 L10.6 24.8" stroke="#000" stroke-width="2.05" fill="none"/></svg>
<svg class="a" style="left:1131.4px;top:712.0px" width="12.0" height="26.0" viewBox="0 0 12 26"><path d="M1.2 1 L10.6 24.8" stroke="#000" stroke-width="2.05" fill="none"/></svg>
<svg class="a" style="left:1260.0px;top:712.0px" width="12.0" height="26.0" viewBox="0 0 12 26"><path d="M1.2 1 L10.6 24.8" stroke="#000" stroke-width="2.05" fill="none"/></svg>
<svg class="a" style="left:1313.1px;top:712.0px" width="12.0" height="26.0" viewBox="0 0 12 26"><path d="M1.2 1 L10.6 24.8" stroke="#000" stroke-width="2.05" fill="none"/></svg>
<svg class="a" style="left:439.1px;top:752.0px" width="12.0" height="26.0" viewBox="0 0 12 26"><path d="M1.2 1 L10.6 24.8" stroke="#000" stroke-width="2.05" fill="none"/></svg>
<svg class="a" style="left:603.6px;top:752.0px" width="12.0" height="26.0" viewBox="0 0 12 26"><path d="M1.2 1 L10.6 24.8" stroke="#000" stroke-width="2.05" fill="none"/></svg>
<svg class="a" style="left:719.5px;top:752.0px" width="12.0" height="26.0" viewBox="0 0 12 26"><path d="M1.2 1 L10.6 24.8" stroke="#000" stroke-width="2.05" fill="none"/></svg>
<svg class="a" style="left:835.3px;top:752.0px" width="12.0" height="26.0" viewBox="0 0 12 26"><path d="M1.2 1 L10.6 24.8" stroke="#000" stroke-width="2.05" fill="none"/></svg>
<svg class="a" style="left:972.7px;top:752.0px" width="12.0" height="26.0" viewBox="0 0 12 26"><path d="M1.2 1 L10.6 24.8" stroke="#000" stroke-width="2.05" fill="none"/></svg>
<svg class="a" style="left:1120.0px;top:752.0px" width="12.0" height="26.0" viewBox="0 0 12 26"><path d="M1.2 1 L10.6 24.8" stroke="#000" stroke-width="2.05" fill="none"/></svg>
<svg class="a" style="left:1131.4px;top:752.0px" width="12.0" height="26.0" viewBox="0 0 12 26"><path d="M1.2 1 L10.6 24.8" stroke="#000" stroke-width="2.05" fill="none"/></svg>
<svg class="a" style="left:1260.0px;top:752.0px" width="12.0" height="26.0" viewBox="0 0 12 26"><path d="M1.2 1 L10.6 24.8" stroke="#000" stroke-width="2.05" fill="none"/></svg>
<svg class="a" style="left:1313.1px;top:752.0px" width="12.0" height="26.0" viewBox="0 0 12 26"><path d="M1.2 1 L10.6 24.8" stroke="#000" stroke-width="2.05" fill="none"/></svg>
<svg class="a" style="left:437.5px;top:792.0px" width="12.0" height="26.0" viewBox="0 0 12 26"><path d="M1.2 1 L10.6 24.8" stroke="#000" stroke-width="2.05" fill="none"/></svg>
<svg class="a" style="left:512.2px;top:792.0px" width="12.0" height="26.0" viewBox="0 0 12 26"><path d="M1.2 1 L10.6 24.8" stroke="#000" stroke-width="2.05" fill="none"/></svg>
<svg class="a" style="left:589.6px;top:792.0px" width="12.0" height="26.0" viewBox="0 0 12 26"><path d="M1.2 1 L10.6 24.8" stroke="#000" stroke-width="2.05" fill="none"/></svg>
<svg class="a" style="left:1120.0px;top:792.0px" width="12.0" height="26.0" viewBox="0 0 12 26"><path d="M1.2 1 L10.6 24.8" stroke="#000" stroke-width="2.05" fill="none"/></svg>
<svg class="a" style="left:1131.4px;top:792.0px" width="12.0" height="26.0" viewBox="0 0 12 26"><path d="M1.2 1 L10.6 24.8" stroke="#000" stroke-width="2.05" fill="none"/></svg>
<svg class="a" style="left:1260.0px;top:792.0px" width="12.0" height="26.0" viewBox="0 0 12 26"><path d="M1.2 1 L10.6 24.8" stroke="#000" stroke-width="2.05" fill="none"/></svg>
<svg class="a" style="left:1313.1px;top:792.0px" width="12.0" height="26.0" viewBox="0 0 12 26"><path d="M1.2 1 L10.6 24.8" stroke="#000" stroke-width="2.05" fill="none"/></svg>
</body></html>
